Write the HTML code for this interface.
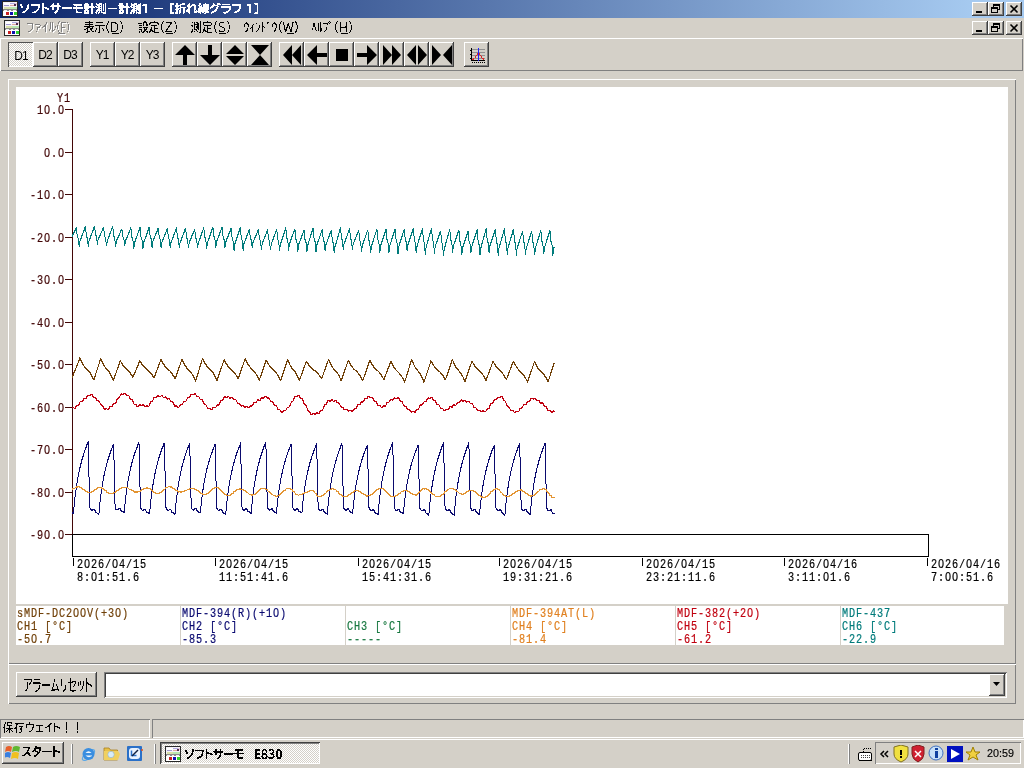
<!DOCTYPE html><html><head><meta charset="utf-8"><style>
*{margin:0;padding:0;box-sizing:border-box}
html,body{width:1024px;height:768px;overflow:hidden;background:#D4D0C8}
body{position:relative;font-family:"Liberation Sans",sans-serif}
div{position:absolute}
.m{font:12px/12px "Liberation Mono",monospace;letter-spacing:1.035px;white-space:pre;transform:scaleX(0.85) translateZ(0);transform-origin:0 0;-webkit-text-stroke:0.2px currentColor}
.u{font:12px/12px "Liberation Sans",sans-serif;white-space:pre;color:#000}
.fit span{-webkit-text-stroke:0.15px currentColor}
</style></head><body>
<div style="position:absolute;left:0px;top:0px;width:1024px;height:18px;background:linear-gradient(to right,#0A246A 0px,#A6CAF0 975px);"></div>
<div style="left:2px;top:1px;width:16px;height:16px"><svg width="16" height="16" viewBox="0 0 16 16" shape-rendering="crispEdges">
<rect x="0" y="0" width="16" height="16" fill="#282828"/>
<rect x="1" y="1" width="14" height="7" fill="#f4f2f8"/>
<rect x="2" y="2" width="6" height="2" fill="#ffffff"/><rect x="8" y="2" width="5" height="1" fill="#b0a8e0"/><rect x="13" y="2" width="2" height="2" fill="#e8c8d8"/>
<rect x="2" y="4" width="5" height="1" fill="#a098d0"/><rect x="8" y="4" width="5" height="1" fill="#e0a8a0"/><rect x="12" y="3" width="2" height="2" fill="#503050"/>
<rect x="2" y="6" width="6" height="2" fill="#d8e0a8"/><rect x="8" y="6" width="7" height="2" fill="#b8e8b0"/>
<rect x="1" y="8" width="14" height="2" fill="#8a8a8a"/><rect x="2" y="9" width="3" height="1" fill="#f0f0f0"/><rect x="7" y="9" width="2" height="1" fill="#f0f0f0"/><rect x="11" y="9" width="3" height="1" fill="#f0f0f0"/>
<rect x="1" y="10" width="14" height="5" fill="#ffffff"/>
<rect x="4" y="11" width="3" height="3" fill="#c82020"/><rect x="8" y="11" width="3" height="3" fill="#1010b0"/><rect x="12" y="11" width="3" height="3" fill="#30d030"/>
</svg></div>
<div style="position:absolute;left:972px;top:2px;width:16px;height:14px;background:#D4D0C8;box-shadow:inset -1px -1px #404040, inset 1px 1px #FFFFFF, inset -2px -2px #808080;"></div><div style="position:absolute;left:976px;top:11px;width:6px;height:2px;background:#000;"></div><div style="position:absolute;left:988px;top:2px;width:16px;height:14px;background:#D4D0C8;box-shadow:inset -1px -1px #404040, inset 1px 1px #FFFFFF, inset -2px -2px #808080;"></div><div style="left:988px;top:2px;width:16px;height:14px"><svg width="16" height="14" shape-rendering="crispEdges"><rect x="5.5" y="2.5" width="6" height="5" fill="none" stroke="#000"/><rect x="5" y="2" width="7" height="2" fill="#000"/><rect x="3.5" y="5.5" width="6" height="5" fill="#D4D0C8" stroke="#000"/><rect x="3" y="5" width="7" height="2" fill="#000"/></svg></div><div style="position:absolute;left:1006px;top:2px;width:16px;height:14px;background:#D4D0C8;box-shadow:inset -1px -1px #404040, inset 1px 1px #FFFFFF, inset -2px -2px #808080;"></div><div style="left:1006px;top:2px;width:16px;height:14px"><svg width="16" height="14"><path d="M4.5,3.5 L11.5,10.5 M11.5,3.5 L4.5,10.5" stroke="#000" stroke-width="1.6"/></svg></div>
<div style="left:4px;top:20px;width:16px;height:16px"><svg width="16" height="16" viewBox="0 0 16 16" shape-rendering="crispEdges">
<rect x="0" y="0" width="16" height="16" fill="#282828"/>
<rect x="1" y="1" width="14" height="7" fill="#f4f2f8"/>
<rect x="2" y="2" width="6" height="2" fill="#ffffff"/><rect x="8" y="2" width="5" height="1" fill="#b0a8e0"/><rect x="13" y="2" width="2" height="2" fill="#e8c8d8"/>
<rect x="2" y="4" width="5" height="1" fill="#a098d0"/><rect x="8" y="4" width="5" height="1" fill="#e0a8a0"/><rect x="12" y="3" width="2" height="2" fill="#503050"/>
<rect x="2" y="6" width="6" height="2" fill="#d8e0a8"/><rect x="8" y="6" width="7" height="2" fill="#b8e8b0"/>
<rect x="1" y="8" width="14" height="2" fill="#8a8a8a"/><rect x="2" y="9" width="3" height="1" fill="#f0f0f0"/><rect x="7" y="9" width="2" height="1" fill="#f0f0f0"/><rect x="11" y="9" width="3" height="1" fill="#f0f0f0"/>
<rect x="1" y="10" width="14" height="5" fill="#ffffff"/>
<rect x="4" y="11" width="3" height="3" fill="#c82020"/><rect x="8" y="11" width="3" height="3" fill="#1010b0"/><rect x="12" y="11" width="3" height="3" fill="#30d030"/>
</svg></div>
<div style="position:absolute;left:972px;top:21px;width:16px;height:14px;background:#D4D0C8;box-shadow:inset -1px -1px #404040, inset 1px 1px #FFFFFF, inset -2px -2px #808080;"></div><div style="position:absolute;left:976px;top:30px;width:6px;height:2px;background:#000;"></div><div style="position:absolute;left:988px;top:21px;width:16px;height:14px;background:#D4D0C8;box-shadow:inset -1px -1px #404040, inset 1px 1px #FFFFFF, inset -2px -2px #808080;"></div><div style="left:988px;top:21px;width:16px;height:14px"><svg width="16" height="14" shape-rendering="crispEdges"><rect x="5.5" y="2.5" width="6" height="5" fill="none" stroke="#000"/><rect x="5" y="2" width="7" height="2" fill="#000"/><rect x="3.5" y="5.5" width="6" height="5" fill="#D4D0C8" stroke="#000"/><rect x="3" y="5" width="7" height="2" fill="#000"/></svg></div><div style="position:absolute;left:1006px;top:21px;width:16px;height:14px;background:#D4D0C8;box-shadow:inset -1px -1px #404040, inset 1px 1px #FFFFFF, inset -2px -2px #808080;"></div><div style="left:1006px;top:21px;width:16px;height:14px"><svg width="16" height="14"><path d="M4.5,3.5 L11.5,10.5 M11.5,3.5 L4.5,10.5" stroke="#000" stroke-width="1.6"/></svg></div>
<div style="position:absolute;left:0px;top:38px;width:1023px;height:33px;background:#D4D0C8;box-shadow:inset 1px 1px #fff, inset -1px -1px #808080"></div>
<div style="left:8px;top:42px;width:25px;height:25px;background:repeating-conic-gradient(#fff 0 25%,#D4D0C8 0 50%) 0 0/2px 2px;box-shadow:inset 1px 1px #505050, inset -1px -1px #fff"></div>
<div style="position:absolute;left:9px;top:50px;font:12px/12px 'Liberation Sans', sans-serif;color:#000;white-space:pre;transform:translateZ(0);width:25px;text-align:center;letter-spacing:-1px;text-indent:-1px">D1</div>
<div style="left:33px;top:42px;width:25px;height:25px;background:#D4D0C8;box-shadow:inset -1px -1px #404040, inset 1px 1px #fff, inset -2px -2px #808080"></div>
<div style="position:absolute;left:33px;top:49px;font:12px/12px 'Liberation Sans', sans-serif;color:#000;white-space:pre;transform:translateZ(0);width:25px;text-align:center;letter-spacing:-1px;text-indent:-1px">D2</div>
<div style="left:58px;top:42px;width:25px;height:25px;background:#D4D0C8;box-shadow:inset -1px -1px #404040, inset 1px 1px #fff, inset -2px -2px #808080"></div>
<div style="position:absolute;left:58px;top:49px;font:12px/12px 'Liberation Sans', sans-serif;color:#000;white-space:pre;transform:translateZ(0);width:25px;text-align:center;letter-spacing:-1px;text-indent:-1px">D3</div>
<div style="left:90px;top:42px;width:25px;height:25px;background:#D4D0C8;box-shadow:inset -1px -1px #404040, inset 1px 1px #fff, inset -2px -2px #808080"></div>
<div style="position:absolute;left:90px;top:49px;font:12px/12px 'Liberation Sans', sans-serif;color:#000;white-space:pre;transform:translateZ(0);width:25px;text-align:center;letter-spacing:-1px;text-indent:-1px">Y1</div>
<div style="left:115px;top:42px;width:25px;height:25px;background:#D4D0C8;box-shadow:inset -1px -1px #404040, inset 1px 1px #fff, inset -2px -2px #808080"></div>
<div style="position:absolute;left:115px;top:49px;font:12px/12px 'Liberation Sans', sans-serif;color:#000;white-space:pre;transform:translateZ(0);width:25px;text-align:center;letter-spacing:-1px;text-indent:-1px">Y2</div>
<div style="left:140px;top:42px;width:25px;height:25px;background:#D4D0C8;box-shadow:inset -1px -1px #404040, inset 1px 1px #fff, inset -2px -2px #808080"></div>
<div style="position:absolute;left:140px;top:49px;font:12px/12px 'Liberation Sans', sans-serif;color:#000;white-space:pre;transform:translateZ(0);width:25px;text-align:center;letter-spacing:-1px;text-indent:-1px">Y3</div>
<div style="left:172px;top:42px;width:25px;height:25px;background:#D4D0C8;box-shadow:inset -1px -1px #404040, inset 1px 1px #fff, inset -2px -2px #808080"></div>
<div style="left:197px;top:42px;width:25px;height:25px;background:#D4D0C8;box-shadow:inset -1px -1px #404040, inset 1px 1px #fff, inset -2px -2px #808080"></div>
<div style="left:222px;top:42px;width:25px;height:25px;background:#D4D0C8;box-shadow:inset -1px -1px #404040, inset 1px 1px #fff, inset -2px -2px #808080"></div>
<div style="left:247px;top:42px;width:25px;height:25px;background:#D4D0C8;box-shadow:inset -1px -1px #404040, inset 1px 1px #fff, inset -2px -2px #808080"></div>
<div style="left:279px;top:42px;width:25px;height:25px;background:#D4D0C8;box-shadow:inset -1px -1px #404040, inset 1px 1px #fff, inset -2px -2px #808080"></div>
<div style="left:304px;top:42px;width:25px;height:25px;background:#D4D0C8;box-shadow:inset -1px -1px #404040, inset 1px 1px #fff, inset -2px -2px #808080"></div>
<div style="left:329px;top:42px;width:25px;height:25px;background:#D4D0C8;box-shadow:inset -1px -1px #404040, inset 1px 1px #fff, inset -2px -2px #808080"></div>
<div style="left:354px;top:42px;width:25px;height:25px;background:#D4D0C8;box-shadow:inset -1px -1px #404040, inset 1px 1px #fff, inset -2px -2px #808080"></div>
<div style="left:379px;top:42px;width:25px;height:25px;background:#D4D0C8;box-shadow:inset -1px -1px #404040, inset 1px 1px #fff, inset -2px -2px #808080"></div>
<div style="left:404px;top:42px;width:25px;height:25px;background:#D4D0C8;box-shadow:inset -1px -1px #404040, inset 1px 1px #fff, inset -2px -2px #808080"></div>
<div style="left:429px;top:42px;width:25px;height:25px;background:#D4D0C8;box-shadow:inset -1px -1px #404040, inset 1px 1px #fff, inset -2px -2px #808080"></div>
<div style="left:464px;top:42px;width:25px;height:25px;background:#D4D0C8;box-shadow:inset -1px -1px #404040, inset 1px 1px #fff, inset -2px -2px #808080"></div>
<svg style="position:absolute;left:0;top:0" width="1024" height="80"><g fill="#000"><path d="M175,55 L185,45 L195,55 Z M183,55 h4 v10 h-4 Z"/><path d="M200,55 L220,55 L210,65 Z M208,45 h4 v10 h-4 Z"/><path d="M226,54 L244,54 L235,45 Z M226,56 L244,56 L235,65 Z"/><path d="M251,45 L269,45 L260,55 Z M251,65 L269,65 L260,55 Z"/><path d="M283,55 L292,45 L292,65 Z M292,55 L301,45 L301,65 Z"/><path d="M307,55 L317,45 L317,65 Z M317,53 h10 v4 h-10 Z"/><path d="M336,49 h12 v12 h-12 Z"/><path d="M377,55 L367,45 L367,65 Z M357,53 h10 v4 h-10 Z"/><path d="M392,55 L383,45 L383,65 Z M401,55 L392,45 L392,65 Z"/><path d="M407,55 L416,45 L416,65 Z M427,55 L418,45 L418,65 Z"/><path d="M441,55 L432,45 L432,65 Z M443,55 L452,45 L452,65 Z"/></g><g shape-rendering="crispEdges"><rect x="472" y="49" width="13" height="1" fill="#909090"/><rect x="472" y="52" width="13" height="1" fill="#909090"/><rect x="472" y="55" width="13" height="1" fill="#909090"/><rect x="472" y="58" width="13" height="1" fill="#909090"/><rect x="471" y="48" width="1" height="13" fill="#000"/><rect x="471" y="60" width="14" height="1" fill="#000"/><rect x="470" y="50" width="1" height="1" fill="#000"/><rect x="470" y="54" width="1" height="1" fill="#000"/><rect x="470" y="58" width="1" height="1" fill="#000"/><path d="M472.5,59.5 L474.5,58.5 L476.5,55.5 L478.5,52.5 L480.5,55.5 L482.5,58.5 L484.5,59.5" stroke="#e02020" fill="none"/><rect x="478" y="48" width="1" height="13" fill="#2020ff"/><rect x="472" y="62" width="1" height="1" fill="#000"/><rect x="474" y="62" width="1" height="1" fill="#000"/><rect x="476" y="62" width="1" height="1" fill="#000"/><rect x="478" y="62" width="1" height="1" fill="#000"/><rect x="480" y="62" width="1" height="1" fill="#000"/><rect x="482" y="62" width="1" height="1" fill="#000"/><rect x="484" y="62" width="1" height="1" fill="#000"/></g></svg>
<div style="position:absolute;left:8px;top:79px;width:1008px;height:585px;background:#D4D0C8;box-shadow:inset 1px 1px #fff, inset -1px -1px #808080"></div>
<div style="position:absolute;left:16px;top:87px;width:992px;height:517px;background:#fff;"></div>
<div style="position:absolute;left:16px;top:606px;width:988px;height:39px;background:#fff;"></div>
<div style="position:absolute;left:180px;top:606px;width:1px;height:39px;background:#D4D0C8;"></div>
<div style="position:absolute;left:345px;top:606px;width:1px;height:39px;background:#D4D0C8;"></div>
<div style="position:absolute;left:510px;top:606px;width:1px;height:39px;background:#D4D0C8;"></div>
<div style="position:absolute;left:675px;top:606px;width:1px;height:39px;background:#D4D0C8;"></div>
<div style="position:absolute;left:840px;top:606px;width:1px;height:39px;background:#D4D0C8;"></div>
<svg style="position:absolute;left:0;top:0" width="1024" height="768"><g shape-rendering="crispEdges" fill="#420606"><rect x="72" y="109" width="1" height="426"/><rect x="65" y="109" width="7" height="1"/><rect x="65" y="152" width="7" height="1"/><rect x="65" y="194" width="7" height="1"/><rect x="65" y="237" width="7" height="1"/><rect x="65" y="279" width="7" height="1"/><rect x="65" y="322" width="7" height="1"/><rect x="65" y="364" width="7" height="1"/><rect x="65" y="407" width="7" height="1"/><rect x="65" y="449" width="7" height="1"/><rect x="65" y="492" width="7" height="1"/><rect x="65" y="534" width="7" height="1"/></g><g shape-rendering="crispEdges" fill="#000"><rect x="72" y="534" width="857" height="1"/><rect x="72" y="556" width="857" height="1"/><rect x="72" y="534" width="1" height="23"/><rect x="928" y="534" width="1" height="23"/><rect x="73" y="558" width="1" height="8"/><rect x="215" y="558" width="1" height="8"/><rect x="358" y="558" width="1" height="8"/><rect x="499" y="558" width="1" height="8"/><rect x="642" y="558" width="1" height="8"/><rect x="784" y="558" width="1" height="8"/><rect x="927" y="558" width="1" height="8"/></g><path d="M72,375h1v3h-1zM73,372h1v4h-1zM74,370h1v3h-1zM75,368h1v3h-1zM76,365h1v3h-1zM77,363h1v3h-1zM78,360h1v3h-1zM79,357h1v4h-1zM80,358h1v3h-1zM81,360h1v3h-1zM82,362h1v3h-1zM83,364h1v2h-1zM84,366h1v2h-1zM85,367h1v2h-1zM86,368h1v2h-1zM87,369h1v2h-1zM88,370h1v2h-1zM89,371h1v2h-1zM90,372h1v3h-1zM91,374h1v3h-1zM92,376h1v3h-1zM93,378h1v2h-1zM94,376h1v4h-1zM95,373h1v4h-1zM96,370h1v3h-1zM97,367h1v3h-1zM98,364h1v3h-1zM99,360h1v4h-1zM100,358h1v3h-1zM101,359h1v3h-1zM102,361h1v3h-1zM103,363h1v3h-1zM104,365h1v2h-1zM105,367h1v2h-1zM106,368h1v2h-1zM107,369h1v2h-1zM108,370h1v2h-1zM109,371h1v3h-1zM110,373h1v3h-1zM111,375h1v3h-1zM112,377h1v3h-1zM113,378h1v3h-1zM114,375h1v4h-1zM115,373h1v3h-1zM116,370h1v3h-1zM117,367h1v3h-1zM118,364h1v4h-1zM119,361h1v4h-1zM120,360h1v2h-1zM121,362h1v2h-1zM122,363h1v3h-1zM123,365h1v2h-1zM124,366h1v2h-1zM125,367h1v2h-1zM126,368h1v2h-1zM127,369h1v2h-1zM128,370h1v2h-1zM129,371h1v2h-1zM130,372h1v3h-1zM131,374h1v2h-1zM132,375h1v3h-1zM133,374h1v3h-1zM134,372h1v3h-1zM135,370h1v3h-1zM136,367h1v3h-1zM137,365h1v3h-1zM138,362h1v4h-1zM139,360h1v3h-1zM140,361h1v2h-1zM141,362h1v3h-1zM142,364h1v2h-1zM143,365h1v2h-1zM144,366h1v2h-1zM145,367h1v2h-1zM146,368h1v2h-1zM147,369h1v2h-1zM148,370h1v2h-1zM149,371h1v2h-1zM150,372h1v2h-1zM151,373h1v2h-1zM152,374h1v3h-1zM153,376h1v2h-1zM154,375h1v3h-1zM155,372h1v4h-1zM156,370h1v3h-1zM157,367h1v3h-1zM158,364h1v4h-1zM159,362h1v3h-1zM160,359h1v3h-1zM161,359h1v3h-1zM162,361h1v3h-1zM163,363h1v2h-1zM164,364h1v3h-1zM165,366h1v2h-1zM166,367h1v2h-1zM167,368h1v2h-1zM168,369h1v2h-1zM169,370h1v1h-1zM170,371h1v2h-1zM171,372h1v2h-1zM172,373h1v3h-1zM173,375h1v2h-1zM174,376h1v3h-1zM175,376h1v3h-1zM176,373h1v4h-1zM177,370h1v4h-1zM178,367h1v4h-1zM179,365h1v3h-1zM180,362h1v3h-1zM181,359h1v3h-1zM182,359h1v3h-1zM183,361h1v3h-1zM184,363h1v3h-1zM185,365h1v2h-1zM186,366h1v3h-1zM187,368h1v2h-1zM188,369h1v2h-1zM189,370h1v2h-1zM190,371h1v2h-1zM191,372h1v2h-1zM192,374h1v2h-1zM193,375h1v3h-1zM194,377h1v3h-1zM195,379h1v3h-1zM196,376h1v4h-1zM197,373h1v4h-1zM198,370h1v4h-1zM199,366h1v4h-1zM200,363h1v4h-1zM201,360h1v4h-1zM202,358h1v2h-1zM203,359h1v3h-1zM204,361h1v3h-1zM205,363h1v2h-1zM206,364h1v3h-1zM207,366h1v2h-1zM208,367h1v2h-1zM209,368h1v2h-1zM210,369h1v2h-1zM211,370h1v2h-1zM212,371h1v2h-1zM213,372h1v3h-1zM214,374h1v3h-1zM215,376h1v3h-1zM216,378h1v3h-1zM217,377h1v4h-1zM218,374h1v4h-1zM219,371h1v4h-1zM220,368h1v4h-1zM221,366h1v3h-1zM222,363h1v3h-1zM223,360h1v3h-1zM224,359h1v3h-1zM225,361h1v3h-1zM226,363h1v2h-1zM227,364h1v3h-1zM228,366h1v2h-1zM229,367h1v2h-1zM230,368h1v2h-1zM231,369h1v2h-1zM232,370h1v2h-1zM233,371h1v2h-1zM234,372h1v2h-1zM235,373h1v2h-1zM236,375h1v2h-1zM237,376h1v3h-1zM238,376h1v3h-1zM239,373h1v4h-1zM240,370h1v4h-1zM241,367h1v4h-1zM242,365h1v3h-1zM243,362h1v3h-1zM244,359h1v3h-1zM245,358h1v3h-1zM246,360h1v3h-1zM247,362h1v3h-1zM248,364h1v2h-1zM249,365h1v2h-1zM250,367h1v2h-1zM251,368h1v2h-1zM252,369h1v2h-1zM253,370h1v2h-1zM254,371h1v2h-1zM255,372h1v2h-1zM256,374h1v2h-1zM257,375h1v3h-1zM258,377h1v3h-1zM259,378h1v3h-1zM260,375h1v3h-1zM261,372h1v4h-1zM262,369h1v4h-1zM263,366h1v4h-1zM264,363h1v4h-1zM265,360h1v4h-1zM266,360h1v2h-1zM267,361h1v3h-1zM268,363h1v2h-1zM269,365h1v2h-1zM270,366h1v2h-1zM271,367h1v2h-1zM272,368h1v2h-1zM273,369h1v2h-1zM274,370h1v2h-1zM275,371h1v2h-1zM276,372h1v2h-1zM277,374h1v2h-1zM278,375h1v3h-1zM279,377h1v3h-1zM280,379h1v2h-1zM281,376h1v4h-1zM282,373h1v4h-1zM283,370h1v4h-1zM284,367h1v4h-1zM285,364h1v4h-1zM286,361h1v4h-1zM287,359h1v3h-1zM288,360h1v3h-1zM289,362h1v3h-1zM290,365h1v2h-1zM291,366h1v3h-1zM292,368h1v2h-1zM293,369h1v2h-1zM294,370h1v2h-1zM295,371h1v3h-1zM296,373h1v3h-1zM297,375h1v3h-1zM298,377h1v3h-1zM299,378h1v3h-1zM300,376h1v3h-1zM301,373h1v3h-1zM302,370h1v4h-1zM303,367h1v4h-1zM304,365h1v3h-1zM305,362h1v3h-1zM306,361h1v2h-1zM307,362h1v2h-1zM308,363h1v3h-1zM309,365h1v2h-1zM310,366h1v2h-1zM311,367h1v2h-1zM312,368h1v2h-1zM313,369h1v2h-1zM314,370h1v1h-1zM315,370h1v2h-1zM316,371h1v2h-1zM317,372h1v2h-1zM318,373h1v2h-1zM319,375h1v2h-1zM320,376h1v2h-1zM321,377h1v2h-1zM322,375h1v3h-1zM323,372h1v3h-1zM324,369h1v3h-1zM325,366h1v4h-1zM326,363h1v4h-1zM327,361h1v3h-1zM328,359h1v2h-1zM329,360h1v3h-1zM330,362h1v3h-1zM331,364h1v3h-1zM332,366h1v2h-1zM333,368h1v2h-1zM334,369h1v2h-1zM335,370h1v2h-1zM336,371h1v2h-1zM337,372h1v2h-1zM338,374h1v2h-1zM339,375h1v3h-1zM340,378h1v3h-1zM341,378h1v3h-1zM342,375h1v4h-1zM343,372h1v4h-1zM344,369h1v4h-1zM345,367h1v3h-1zM346,364h1v3h-1zM347,361h1v3h-1zM348,360h1v2h-1zM349,361h1v3h-1zM350,363h1v3h-1zM351,365h1v2h-1zM352,366h1v2h-1zM353,368h1v2h-1zM354,369h1v1h-1zM355,370h1v1h-1zM356,370h1v2h-1zM357,371h1v2h-1zM358,373h1v2h-1zM359,374h1v2h-1zM360,375h1v3h-1zM361,377h1v3h-1zM362,379h1v2h-1zM363,377h1v3h-1zM364,374h1v3h-1zM365,371h1v4h-1zM366,368h1v4h-1zM367,365h1v4h-1zM368,362h1v4h-1zM369,360h1v3h-1zM370,360h1v3h-1zM371,362h1v3h-1zM372,364h1v2h-1zM373,365h1v3h-1zM374,367h1v2h-1zM375,368h1v2h-1zM376,369h1v2h-1zM377,370h1v1h-1zM378,371h1v1h-1zM379,372h1v2h-1zM380,373h1v2h-1zM381,374h1v3h-1zM382,376h1v2h-1zM383,378h1v2h-1zM384,376h1v4h-1zM385,374h1v3h-1zM386,371h1v3h-1zM387,368h1v4h-1zM388,366h1v3h-1zM389,363h1v4h-1zM390,361h1v3h-1zM391,361h1v3h-1zM392,363h1v3h-1zM393,365h1v3h-1zM394,367h1v2h-1zM395,368h1v2h-1zM396,370h1v1h-1zM397,371h1v1h-1zM398,372h1v1h-1zM399,373h1v2h-1zM400,374h1v2h-1zM401,375h1v2h-1zM402,377h1v2h-1zM403,378h1v3h-1zM404,380h1v3h-1zM405,378h1v3h-1zM406,374h1v4h-1zM407,371h1v4h-1zM408,368h1v4h-1zM409,364h1v4h-1zM410,361h1v4h-1zM411,359h1v3h-1zM412,360h1v3h-1zM413,362h1v3h-1zM414,365h1v2h-1zM415,367h1v2h-1zM416,368h1v2h-1zM417,369h1v2h-1zM418,371h1v2h-1zM419,372h1v2h-1zM420,373h1v3h-1zM421,375h1v3h-1zM422,377h1v3h-1zM423,379h1v4h-1zM424,379h1v3h-1zM425,376h1v3h-1zM426,373h1v3h-1zM427,370h1v3h-1zM428,367h1v3h-1zM429,364h1v3h-1zM430,360h1v4h-1zM431,361h1v2h-1zM432,362h1v3h-1zM433,364h1v2h-1zM434,366h1v2h-1zM435,367h1v2h-1zM436,368h1v2h-1zM437,369h1v2h-1zM438,370h1v2h-1zM439,371h1v1h-1zM440,372h1v2h-1zM441,373h1v2h-1zM442,374h1v2h-1zM443,375h1v3h-1zM444,377h1v3h-1zM445,378h1v2h-1zM446,375h1v3h-1zM447,372h1v4h-1zM448,369h1v4h-1zM449,366h1v4h-1zM450,363h1v4h-1zM451,360h1v4h-1zM452,359h1v2h-1zM453,361h1v3h-1zM454,363h1v3h-1zM455,365h1v3h-1zM456,367h1v2h-1zM457,368h1v2h-1zM458,369h1v2h-1zM459,371h1v2h-1zM460,372h1v2h-1zM461,373h1v3h-1zM462,375h1v2h-1zM463,377h1v3h-1zM464,379h1v3h-1zM465,378h1v4h-1zM466,375h1v4h-1zM467,372h1v4h-1zM468,369h1v4h-1zM469,366h1v4h-1zM470,364h1v3h-1zM471,361h1v3h-1zM472,361h1v2h-1zM473,363h1v2h-1zM474,364h1v3h-1zM475,366h1v2h-1zM476,367h1v2h-1zM477,368h1v2h-1zM478,369h1v2h-1zM479,370h1v2h-1zM480,371h1v2h-1zM481,372h1v2h-1zM482,373h1v2h-1zM483,375h1v2h-1zM484,376h1v3h-1zM485,378h1v3h-1zM486,377h1v4h-1zM487,375h1v3h-1zM488,372h1v3h-1zM489,369h1v4h-1zM490,367h1v3h-1zM491,364h1v3h-1zM492,361h1v3h-1zM493,361h1v2h-1zM494,363h1v2h-1zM495,364h1v3h-1zM496,366h1v2h-1zM497,367h1v2h-1zM498,368h1v2h-1zM499,369h1v2h-1zM500,370h1v2h-1zM501,371h1v2h-1zM502,372h1v2h-1zM503,374h1v2h-1zM504,375h1v3h-1zM505,377h1v2h-1zM506,378h1v2h-1zM507,375h1v3h-1zM508,372h1v4h-1zM509,370h1v3h-1zM510,367h1v3h-1zM511,364h1v4h-1zM512,362h1v3h-1zM513,361h1v2h-1zM514,362h1v3h-1zM515,364h1v2h-1zM516,366h1v2h-1zM517,367h1v2h-1zM518,369h1v2h-1zM519,370h1v2h-1zM520,371h1v2h-1zM521,372h1v2h-1zM522,373h1v2h-1zM523,374h1v2h-1zM524,375h1v3h-1zM525,377h1v2h-1zM526,379h1v2h-1zM527,380h1v3h-1zM528,377h1v4h-1zM529,374h1v4h-1zM530,371h1v4h-1zM531,369h1v3h-1zM532,366h1v3h-1zM533,363h1v3h-1zM534,361h1v2h-1zM535,362h1v3h-1zM536,364h1v3h-1zM537,366h1v3h-1zM538,368h1v2h-1zM539,369h1v2h-1zM540,370h1v2h-1zM541,371h1v2h-1zM542,372h1v2h-1zM543,373h1v2h-1zM544,374h1v3h-1zM545,376h1v2h-1zM546,377h1v3h-1zM547,379h1v3h-1zM548,379h1v3h-1zM549,376h1v3h-1zM550,372h1v4h-1zM551,369h1v4h-1zM552,366h1v4h-1zM553,363h1v4h-1zM554,363h1v1h-1z" fill="#704008" shape-rendering="crispEdges"/><path d="M72,512h1v2h-1zM73,507h1v7h-1zM74,497h1v10h-1zM75,490h1v7h-1zM76,483h1v7h-1zM77,477h1v6h-1zM78,472h1v5h-1zM79,467h1v5h-1zM80,463h1v5h-1zM81,459h1v5h-1zM82,456h1v4h-1zM83,453h1v4h-1zM84,450h1v3h-1zM85,447h1v3h-1zM86,444h1v4h-1zM87,442h1v3h-1zM88,441h1v36h-1zM89,477h1v31h-1zM90,508h1v2h-1zM91,509h1v2h-1zM92,509h1v2h-1zM93,509h1v1h-1zM94,509h1v2h-1zM95,510h1v3h-1zM96,512h1v1h-1zM97,513h1v1h-1zM98,513h1v2h-1zM99,502h1v11h-1zM100,494h1v8h-1zM101,487h1v7h-1zM102,481h1v6h-1zM103,475h1v6h-1zM104,471h1v5h-1zM105,467h1v4h-1zM106,463h1v4h-1zM107,459h1v4h-1zM108,456h1v4h-1zM109,453h1v4h-1zM110,450h1v4h-1zM111,448h1v3h-1zM112,445h1v3h-1zM113,444h1v16h-1zM114,460h1v44h-1zM115,504h1v6h-1zM116,509h1v1h-1zM117,509h1v1h-1zM118,508h1v2h-1zM119,508h1v1h-1zM120,508h1v3h-1zM121,510h1v2h-1zM122,511h1v1h-1zM123,511h1v2h-1zM124,504h1v9h-1zM125,495h1v9h-1zM126,487h1v8h-1zM127,481h1v7h-1zM128,476h1v5h-1zM129,471h1v5h-1zM130,466h1v5h-1zM131,462h1v5h-1zM132,459h1v4h-1zM133,455h1v4h-1zM134,452h1v4h-1zM135,450h1v3h-1zM136,447h1v3h-1zM137,444h1v4h-1zM138,442h1v3h-1zM139,444h1v43h-1zM140,487h1v22h-1zM141,508h1v2h-1zM142,510h1v1h-1zM143,509h1v2h-1zM144,509h1v1h-1zM145,509h1v2h-1zM146,511h1v2h-1zM147,512h1v1h-1zM148,512h1v2h-1zM149,509h1v5h-1zM150,499h1v10h-1zM151,491h1v8h-1zM152,484h1v7h-1zM153,479h1v6h-1zM154,473h1v6h-1zM155,469h1v5h-1zM156,465h1v4h-1zM157,461h1v4h-1zM158,457h1v4h-1zM159,454h1v4h-1zM160,451h1v4h-1zM161,448h1v4h-1zM162,446h1v3h-1zM163,443h1v4h-1zM164,443h1v28h-1zM165,471h1v37h-1zM166,507h1v3h-1zM167,509h1v2h-1zM168,510h1v1h-1zM169,509h1v1h-1zM170,509h1v1h-1zM171,510h1v3h-1zM172,512h1v1h-1zM173,512h1v2h-1zM174,513h1v2h-1zM175,503h1v11h-1zM176,495h1v8h-1zM177,487h1v8h-1zM178,481h1v6h-1zM179,476h1v5h-1zM180,471h1v5h-1zM181,466h1v5h-1zM182,463h1v4h-1zM183,459h1v4h-1zM184,456h1v4h-1zM185,453h1v3h-1zM186,450h1v3h-1zM187,447h1v3h-1zM188,445h1v3h-1zM189,443h1v13h-1zM190,456h1v42h-1zM191,498h1v11h-1zM192,509h1v1h-1zM193,509h1v2h-1zM194,508h1v2h-1zM195,508h1v1h-1zM196,508h1v3h-1zM197,510h1v2h-1zM198,511h1v2h-1zM199,512h1v1h-1zM200,506h1v7h-1zM201,497h1v9h-1zM202,489h1v8h-1zM203,483h1v7h-1zM204,478h1v5h-1zM205,473h1v5h-1zM206,468h1v5h-1zM207,465h1v4h-1zM208,461h1v4h-1zM209,458h1v4h-1zM210,455h1v3h-1zM211,452h1v3h-1zM212,449h1v4h-1zM213,447h1v3h-1zM214,444h1v3h-1zM215,444h1v37h-1zM216,481h1v28h-1zM217,508h1v2h-1zM218,510h1v1h-1zM219,509h1v2h-1zM220,509h1v1h-1zM221,509h1v2h-1zM222,510h1v3h-1zM223,512h1v2h-1zM224,513h1v1h-1zM225,511h1v4h-1zM226,501h1v10h-1zM227,493h1v8h-1zM228,486h1v7h-1zM229,480h1v6h-1zM230,475h1v5h-1zM231,470h1v5h-1zM232,466h1v5h-1zM233,462h1v4h-1zM234,459h1v4h-1zM235,455h1v4h-1zM236,452h1v4h-1zM237,450h1v3h-1zM238,447h1v3h-1zM239,445h1v3h-1zM240,442h1v22h-1zM241,464h1v43h-1zM242,507h1v3h-1zM243,509h1v2h-1zM244,509h1v2h-1zM245,508h1v2h-1zM246,508h1v2h-1zM247,509h1v3h-1zM248,511h1v1h-1zM249,511h1v2h-1zM250,512h1v2h-1zM251,504h1v10h-1zM252,495h1v9h-1zM253,487h1v8h-1zM254,481h1v6h-1zM255,475h1v6h-1zM256,470h1v6h-1zM257,466h1v5h-1zM258,462h1v4h-1zM259,458h1v5h-1zM260,455h1v4h-1zM261,452h1v4h-1zM262,449h1v4h-1zM263,446h1v4h-1zM264,444h1v3h-1zM265,442h1v7h-1zM266,449h1v43h-1zM267,492h1v17h-1zM268,508h1v2h-1zM269,509h1v2h-1zM270,509h1v1h-1zM271,508h1v2h-1zM272,508h1v3h-1zM273,510h1v2h-1zM274,511h1v2h-1zM275,512h1v1h-1zM276,507h1v7h-1zM277,498h1v9h-1zM278,490h1v8h-1zM279,484h1v6h-1zM280,478h1v6h-1zM281,473h1v5h-1zM282,469h1v5h-1zM283,465h1v4h-1zM284,461h1v4h-1zM285,458h1v4h-1zM286,455h1v3h-1zM287,452h1v3h-1zM288,449h1v3h-1zM289,447h1v3h-1zM290,444h1v3h-1zM291,444h1v32h-1zM292,476h1v32h-1zM293,508h1v2h-1zM294,509h1v2h-1zM295,509h1v2h-1zM296,508h1v2h-1zM297,508h1v2h-1zM298,509h1v3h-1zM299,511h1v1h-1zM300,511h1v2h-1zM301,512h1v1h-1zM302,501h1v11h-1zM303,493h1v8h-1zM304,486h1v7h-1zM305,480h1v6h-1zM306,475h1v5h-1zM307,470h1v5h-1zM308,466h1v5h-1zM309,462h1v5h-1zM310,459h1v4h-1zM311,456h1v4h-1zM312,453h1v3h-1zM313,450h1v4h-1zM314,448h1v3h-1zM315,445h1v3h-1zM316,443h1v16h-1zM317,459h1v43h-1zM318,502h1v8h-1zM319,509h1v2h-1zM320,510h1v1h-1zM321,509h1v2h-1zM322,509h1v1h-1zM323,509h1v3h-1zM324,511h1v2h-1zM325,512h1v2h-1zM326,513h1v1h-1zM327,506h1v9h-1zM328,497h1v9h-1zM329,489h1v8h-1zM330,483h1v6h-1zM331,477h1v6h-1zM332,472h1v5h-1zM333,468h1v4h-1zM334,464h1v4h-1zM335,460h1v4h-1zM336,457h1v4h-1zM337,454h1v3h-1zM338,451h1v3h-1zM339,448h1v3h-1zM340,445h1v4h-1zM341,443h1v3h-1zM342,445h1v41h-1zM343,486h1v23h-1zM344,508h1v2h-1zM345,509h1v2h-1zM346,509h1v2h-1zM347,508h1v2h-1zM348,508h1v2h-1zM349,510h1v2h-1zM350,511h1v2h-1zM351,512h1v1h-1zM352,509h1v5h-1zM353,500h1v9h-1zM354,492h1v8h-1zM355,485h1v7h-1zM356,480h1v5h-1zM357,475h1v5h-1zM358,470h1v5h-1zM359,466h1v5h-1zM360,463h1v4h-1zM361,459h1v4h-1zM362,456h1v4h-1zM363,453h1v4h-1zM364,451h1v3h-1zM365,448h1v3h-1zM366,446h1v3h-1zM367,445h1v24h-1zM368,469h1v39h-1zM369,507h1v3h-1zM370,509h1v2h-1zM371,510h1v1h-1zM372,509h1v2h-1zM373,509h1v2h-1zM374,510h1v3h-1zM375,512h1v2h-1zM376,513h1v1h-1zM377,513h1v2h-1zM378,504h1v11h-1zM379,495h1v9h-1zM380,488h1v7h-1zM381,481h1v7h-1zM382,476h1v5h-1zM383,471h1v5h-1zM384,466h1v5h-1zM385,462h1v5h-1zM386,459h1v4h-1zM387,455h1v4h-1zM388,452h1v4h-1zM389,449h1v4h-1zM390,447h1v3h-1zM391,444h1v3h-1zM392,442h1v13h-1zM393,455h1v41h-1zM394,496h1v13h-1zM395,509h1v2h-1zM396,510h1v1h-1zM397,509h1v2h-1zM398,509h1v1h-1zM399,509h1v3h-1zM400,511h1v2h-1zM401,512h1v1h-1zM402,512h1v2h-1zM403,507h1v7h-1zM404,498h1v9h-1zM405,491h1v7h-1zM406,484h1v7h-1zM407,479h1v5h-1zM408,474h1v5h-1zM409,469h1v5h-1zM410,465h1v5h-1zM411,462h1v4h-1zM412,459h1v3h-1zM413,456h1v3h-1zM414,453h1v3h-1zM415,450h1v3h-1zM416,448h1v3h-1zM417,445h1v3h-1zM418,445h1v34h-1zM419,479h1v30h-1zM420,508h1v2h-1zM421,510h1v1h-1zM422,510h1v1h-1zM423,509h1v2h-1zM424,509h1v2h-1zM425,510h1v3h-1zM426,513h1v1h-1zM427,513h1v2h-1zM428,513h1v3h-1zM429,502h1v11h-1zM430,494h1v8h-1zM431,486h1v8h-1zM432,480h1v7h-1zM433,475h1v6h-1zM434,470h1v5h-1zM435,466h1v5h-1zM436,462h1v4h-1zM437,458h1v4h-1zM438,455h1v4h-1zM439,452h1v4h-1zM440,449h1v4h-1zM441,446h1v4h-1zM442,444h1v3h-1zM443,442h1v21h-1zM444,463h1v43h-1zM445,506h1v4h-1zM446,509h1v2h-1zM447,510h1v1h-1zM448,509h1v2h-1zM449,509h1v2h-1zM450,510h1v3h-1zM451,512h1v2h-1zM452,513h1v2h-1zM453,514h1v1h-1zM454,506h1v10h-1zM455,496h1v10h-1zM456,489h1v7h-1zM457,482h1v7h-1zM458,477h1v6h-1zM459,472h1v5h-1zM460,467h1v5h-1zM461,463h1v5h-1zM462,460h1v4h-1zM463,456h1v4h-1zM464,453h1v4h-1zM465,450h1v4h-1zM466,447h1v4h-1zM467,445h1v3h-1zM468,442h1v7h-1zM469,449h1v41h-1zM470,490h1v19h-1zM471,508h1v3h-1zM472,510h1v1h-1zM473,509h1v2h-1zM474,509h1v1h-1zM475,509h1v3h-1zM476,511h1v2h-1zM477,512h1v2h-1zM478,513h1v2h-1zM479,509h1v6h-1zM480,500h1v9h-1zM481,492h1v8h-1zM482,485h1v7h-1zM483,480h1v6h-1zM484,475h1v5h-1zM485,470h1v5h-1zM486,466h1v5h-1zM487,463h1v4h-1zM488,459h1v4h-1zM489,456h1v4h-1zM490,453h1v4h-1zM491,450h1v4h-1zM492,448h1v3h-1zM493,446h1v3h-1zM494,445h1v29h-1zM495,474h1v34h-1zM496,508h1v2h-1zM497,509h1v2h-1zM498,510h1v1h-1zM499,509h1v2h-1zM500,509h1v2h-1zM501,510h1v3h-1zM502,512h1v2h-1zM503,513h1v2h-1zM504,514h1v2h-1zM505,503h1v11h-1zM506,495h1v8h-1zM507,487h1v8h-1zM508,481h1v7h-1zM509,476h1v5h-1zM510,471h1v5h-1zM511,467h1v4h-1zM512,463h1v4h-1zM513,459h1v4h-1zM514,456h1v4h-1zM515,453h1v3h-1zM516,450h1v3h-1zM517,447h1v4h-1zM518,445h1v3h-1zM519,443h1v14h-1zM520,457h1v43h-1zM521,500h1v10h-1zM522,509h1v2h-1zM523,510h1v1h-1zM524,509h1v2h-1zM525,509h1v1h-1zM526,509h1v3h-1zM527,511h1v2h-1zM528,512h1v2h-1zM529,513h1v2h-1zM530,506h1v9h-1zM531,497h1v9h-1zM532,490h1v7h-1zM533,483h1v7h-1zM534,477h1v6h-1zM535,472h1v6h-1zM536,468h1v5h-1zM537,464h1v4h-1zM538,460h1v5h-1zM539,457h1v4h-1zM540,454h1v4h-1zM541,451h1v3h-1zM542,448h1v4h-1zM543,446h1v3h-1zM544,443h1v3h-1zM545,443h1v41h-1zM546,484h1v25h-1zM547,508h1v3h-1zM548,510h1v1h-1zM549,510h1v1h-1zM550,509h1v2h-1zM551,509h1v3h-1zM552,512h1v2h-1zM553,513h1v1h-1zM554,513h1v1h-1z" fill="#0A0A6E" shape-rendering="crispEdges"/><path d="M72,488h1v2h-1zM73,488h1v1h-1zM74,488h1v1h-1zM75,487h1v1h-1zM76,486h1v2h-1zM77,486h1v2h-1zM78,486h1v1h-1zM79,486h1v2h-1zM80,487h1v1h-1zM81,487h1v2h-1zM82,488h1v2h-1zM83,489h1v1h-1zM84,489h1v2h-1zM85,490h1v2h-1zM86,491h1v1h-1zM87,491h1v2h-1zM88,492h1v1h-1zM89,492h1v1h-1zM90,492h1v1h-1zM91,491h1v2h-1zM92,491h1v1h-1zM93,490h1v2h-1zM94,489h1v2h-1zM95,489h1v1h-1zM96,488h1v2h-1zM97,487h1v2h-1zM98,487h1v1h-1zM99,487h1v1h-1zM100,487h1v1h-1zM101,487h1v2h-1zM102,488h1v1h-1zM103,488h1v2h-1zM104,489h1v2h-1zM105,490h1v1h-1zM106,490h1v3h-1zM107,492h1v1h-1zM108,492h1v2h-1zM109,493h1v1h-1zM110,493h1v1h-1zM111,493h1v1h-1zM112,493h1v1h-1zM113,492h1v2h-1zM114,492h1v1h-1zM115,491h1v2h-1zM116,490h1v2h-1zM117,490h1v1h-1zM118,489h1v2h-1zM119,488h1v2h-1zM120,488h1v1h-1zM121,487h1v2h-1zM122,487h1v1h-1zM123,487h1v1h-1zM124,487h1v1h-1zM125,487h1v1h-1zM126,487h1v1h-1zM127,487h1v1h-1zM128,488h1v1h-1zM129,489h1v1h-1zM130,489h1v1h-1zM131,489h1v2h-1zM132,490h1v1h-1zM133,490h1v2h-1zM134,491h1v2h-1zM135,491h1v2h-1zM136,491h1v2h-1zM137,491h1v2h-1zM138,491h1v1h-1zM139,491h1v1h-1zM140,490h1v2h-1zM141,489h1v2h-1zM142,489h1v1h-1zM143,488h1v2h-1zM144,488h1v1h-1zM145,488h1v1h-1zM146,487h1v2h-1zM147,487h1v2h-1zM148,488h1v1h-1zM149,488h1v1h-1zM150,488h1v2h-1zM151,489h1v2h-1zM152,490h1v2h-1zM153,491h1v2h-1zM154,492h1v1h-1zM155,492h1v2h-1zM156,493h1v1h-1zM157,493h1v1h-1zM158,493h1v1h-1zM159,492h1v2h-1zM160,492h1v1h-1zM161,491h1v2h-1zM162,490h1v2h-1zM163,489h1v2h-1zM164,489h1v1h-1zM165,487h1v2h-1zM166,487h1v1h-1zM167,487h1v1h-1zM168,486h1v1h-1zM169,486h1v1h-1zM170,486h1v2h-1zM171,486h1v2h-1zM172,487h1v2h-1zM173,488h1v1h-1zM174,488h1v2h-1zM175,489h1v2h-1zM176,490h1v1h-1zM177,490h1v2h-1zM178,491h1v2h-1zM179,491h1v1h-1zM180,491h1v2h-1zM181,491h1v2h-1zM182,491h1v1h-1zM183,491h1v1h-1zM184,490h1v2h-1zM185,490h1v1h-1zM186,490h1v1h-1zM187,489h1v1h-1zM188,489h1v1h-1zM189,488h1v2h-1zM190,488h1v1h-1zM191,488h1v1h-1zM192,488h1v1h-1zM193,488h1v1h-1zM194,488h1v2h-1zM195,489h1v1h-1zM196,489h1v2h-1zM197,490h1v1h-1zM198,490h1v2h-1zM199,491h1v2h-1zM200,492h1v2h-1zM201,493h1v1h-1zM202,493h1v2h-1zM203,494h1v1h-1zM204,494h1v1h-1zM205,494h1v1h-1zM206,493h1v2h-1zM207,493h1v1h-1zM208,492h1v2h-1zM209,491h1v2h-1zM210,490h1v2h-1zM211,489h1v2h-1zM212,488h1v2h-1zM213,488h1v1h-1zM214,487h1v2h-1zM215,487h1v1h-1zM216,487h1v1h-1zM217,487h1v1h-1zM218,487h1v2h-1zM219,488h1v2h-1zM220,489h1v2h-1zM221,490h1v2h-1zM222,491h1v2h-1zM223,492h1v2h-1zM224,493h1v2h-1zM225,494h1v1h-1zM226,494h1v2h-1zM227,495h1v1h-1zM228,495h1v1h-1zM229,495h1v1h-1zM230,494h1v2h-1zM231,493h1v2h-1zM232,493h1v1h-1zM233,491h1v3h-1zM234,491h1v1h-1zM235,490h1v2h-1zM236,489h1v2h-1zM237,489h1v1h-1zM238,489h1v1h-1zM239,488h1v2h-1zM240,488h1v2h-1zM241,489h1v1h-1zM242,489h1v1h-1zM243,489h1v2h-1zM244,490h1v1h-1zM245,490h1v2h-1zM246,491h1v2h-1zM247,492h1v1h-1zM248,493h1v1h-1zM249,494h1v1h-1zM250,494h1v1h-1zM251,494h1v2h-1zM252,494h1v2h-1zM253,494h1v1h-1zM254,494h1v1h-1zM255,493h1v2h-1zM256,492h1v2h-1zM257,491h1v2h-1zM258,490h1v2h-1zM259,489h1v2h-1zM260,488h1v2h-1zM261,488h1v1h-1zM262,488h1v1h-1zM263,488h1v1h-1zM264,488h1v1h-1zM265,488h1v2h-1zM266,489h1v1h-1zM267,489h1v2h-1zM268,491h1v1h-1zM269,491h1v2h-1zM270,492h1v2h-1zM271,493h1v2h-1zM272,494h1v1h-1zM273,495h1v1h-1zM274,495h1v1h-1zM275,495h1v2h-1zM276,496h1v1h-1zM277,495h1v2h-1zM278,495h1v1h-1zM279,494h1v2h-1zM280,493h1v2h-1zM281,492h1v2h-1zM282,491h1v2h-1zM283,490h1v2h-1zM284,490h1v1h-1zM285,489h1v2h-1zM286,488h1v1h-1zM287,488h1v1h-1zM288,488h1v1h-1zM289,488h1v1h-1zM290,488h1v2h-1zM291,489h1v1h-1zM292,489h1v3h-1zM293,491h1v1h-1zM294,491h1v2h-1zM295,493h1v2h-1zM296,494h1v1h-1zM297,494h1v1h-1zM298,495h1v1h-1zM299,494h1v1h-1zM300,494h1v1h-1zM301,494h1v1h-1zM302,493h1v2h-1zM303,493h1v1h-1zM304,492h1v2h-1zM305,492h1v1h-1zM306,492h1v1h-1zM307,491h1v2h-1zM308,491h1v1h-1zM309,490h1v2h-1zM310,490h1v1h-1zM311,490h1v1h-1zM312,490h1v1h-1zM313,490h1v2h-1zM314,491h1v2h-1zM315,493h1v1h-1zM316,493h1v3h-1zM317,495h1v2h-1zM318,496h1v1h-1zM319,496h1v1h-1zM320,496h1v1h-1zM321,495h1v2h-1zM322,495h1v1h-1zM323,494h1v2h-1zM324,493h1v2h-1zM325,493h1v1h-1zM326,491h1v2h-1zM327,490h1v2h-1zM328,490h1v1h-1zM329,489h1v2h-1zM330,489h1v1h-1zM331,488h1v2h-1zM332,488h1v1h-1zM333,488h1v2h-1zM334,489h1v1h-1zM335,489h1v1h-1zM336,490h1v2h-1zM337,491h1v1h-1zM338,491h1v3h-1zM339,493h1v2h-1zM340,494h1v1h-1zM341,494h1v2h-1zM342,495h1v2h-1zM343,496h1v1h-1zM344,496h1v1h-1zM345,496h1v1h-1zM346,496h1v1h-1zM347,495h1v2h-1zM348,494h1v2h-1zM349,494h1v1h-1zM350,493h1v2h-1zM351,492h1v2h-1zM352,492h1v1h-1zM353,491h1v2h-1zM354,490h1v2h-1zM355,490h1v1h-1zM356,490h1v1h-1zM357,490h1v1h-1zM358,490h1v2h-1zM359,491h1v1h-1zM360,491h1v2h-1zM361,492h1v2h-1zM362,493h1v1h-1zM363,493h1v2h-1zM364,494h1v1h-1zM365,494h1v2h-1zM366,495h1v2h-1zM367,495h1v2h-1zM368,495h1v1h-1zM369,495h1v1h-1zM370,494h1v2h-1zM371,494h1v1h-1zM372,493h1v2h-1zM373,492h1v2h-1zM374,491h1v2h-1zM375,490h1v2h-1zM376,489h1v2h-1zM377,489h1v1h-1zM378,488h1v2h-1zM379,488h1v1h-1zM380,488h1v1h-1zM381,488h1v1h-1zM382,488h1v1h-1zM383,488h1v2h-1zM384,489h1v2h-1zM385,490h1v2h-1zM386,491h1v2h-1zM387,492h1v2h-1zM388,493h1v2h-1zM389,494h1v2h-1zM390,495h1v2h-1zM391,496h1v1h-1zM392,496h1v1h-1zM393,496h1v1h-1zM394,496h1v1h-1zM395,495h1v2h-1zM396,495h1v1h-1zM397,494h1v2h-1zM398,493h1v2h-1zM399,493h1v1h-1zM400,492h1v2h-1zM401,491h1v1h-1zM402,491h1v1h-1zM403,490h1v2h-1zM404,490h1v1h-1zM405,490h1v1h-1zM406,490h1v1h-1zM407,490h1v2h-1zM408,491h1v1h-1zM409,491h1v2h-1zM410,492h1v2h-1zM411,493h1v1h-1zM412,493h1v2h-1zM413,494h1v1h-1zM414,494h1v1h-1zM415,494h1v2h-1zM416,494h1v2h-1zM417,493h1v2h-1zM418,492h1v2h-1zM419,491h1v2h-1zM420,490h1v2h-1zM421,489h1v2h-1zM422,488h1v2h-1zM423,488h1v1h-1zM424,488h1v2h-1zM425,488h1v1h-1zM426,488h1v2h-1zM427,489h1v1h-1zM428,489h1v2h-1zM429,490h1v2h-1zM430,491h1v2h-1zM431,492h1v2h-1zM432,493h1v2h-1zM433,494h1v1h-1zM434,494h1v2h-1zM435,496h1v1h-1zM436,496h1v1h-1zM437,496h1v1h-1zM438,496h1v1h-1zM439,496h1v1h-1zM440,495h1v2h-1zM441,494h1v2h-1zM442,494h1v1h-1zM443,493h1v2h-1zM444,491h1v3h-1zM445,491h1v1h-1zM446,490h1v2h-1zM447,489h1v2h-1zM448,489h1v1h-1zM449,488h1v1h-1zM450,488h1v1h-1zM451,488h1v1h-1zM452,488h1v1h-1zM453,488h1v2h-1zM454,489h1v1h-1zM455,489h1v2h-1zM456,490h1v2h-1zM457,491h1v1h-1zM458,492h1v1h-1zM459,493h1v1h-1zM460,493h1v1h-1zM461,493h1v2h-1zM462,494h1v1h-1zM463,493h1v2h-1zM464,493h1v1h-1zM465,492h1v2h-1zM466,491h1v2h-1zM467,491h1v1h-1zM468,490h1v2h-1zM469,490h1v1h-1zM470,490h1v1h-1zM471,490h1v1h-1zM472,490h1v1h-1zM473,490h1v2h-1zM474,491h1v1h-1zM475,491h1v2h-1zM476,492h1v2h-1zM477,493h1v2h-1zM478,494h1v2h-1zM479,495h1v1h-1zM480,495h1v2h-1zM481,496h1v2h-1zM482,496h1v2h-1zM483,497h1v1h-1zM484,497h1v1h-1zM485,496h1v2h-1zM486,496h1v1h-1zM487,495h1v2h-1zM488,494h1v2h-1zM489,493h1v2h-1zM490,491h1v3h-1zM491,491h1v1h-1zM492,490h1v2h-1zM493,489h1v2h-1zM494,489h1v1h-1zM495,488h1v2h-1zM496,488h1v1h-1zM497,488h1v2h-1zM498,489h1v1h-1zM499,489h1v2h-1zM500,491h1v2h-1zM501,492h1v1h-1zM502,493h1v2h-1zM503,494h1v2h-1zM504,495h1v1h-1zM505,495h1v2h-1zM506,496h1v1h-1zM507,496h1v1h-1zM508,496h1v1h-1zM509,495h1v2h-1zM510,495h1v1h-1zM511,494h1v2h-1zM512,493h1v2h-1zM513,493h1v1h-1zM514,492h1v2h-1zM515,491h1v2h-1zM516,491h1v1h-1zM517,490h1v2h-1zM518,490h1v1h-1zM519,490h1v1h-1zM520,489h1v2h-1zM521,489h1v2h-1zM522,490h1v2h-1zM523,491h1v1h-1zM524,491h1v2h-1zM525,492h1v2h-1zM526,493h1v1h-1zM527,493h1v2h-1zM528,494h1v2h-1zM529,495h1v1h-1zM530,495h1v2h-1zM531,495h1v2h-1zM532,495h1v1h-1zM533,495h1v1h-1zM534,494h1v2h-1zM535,493h1v2h-1zM536,492h1v2h-1zM537,491h1v2h-1zM538,491h1v1h-1zM539,489h1v2h-1zM540,489h1v1h-1zM541,489h1v1h-1zM542,488h1v2h-1zM543,488h1v1h-1zM544,488h1v2h-1zM545,489h1v1h-1zM546,489h1v3h-1zM547,491h1v2h-1zM548,492h1v2h-1zM549,493h1v3h-1zM550,495h1v1h-1zM551,495h1v3h-1zM552,497h1v1h-1zM553,497h1v1h-1zM554,497h1v1h-1z" fill="#E39432" shape-rendering="crispEdges"/><path d="M72,407h1v1h-1zM73,407h1v1h-1zM74,408h1v1h-1zM75,406h1v3h-1zM76,405h1v2h-1zM77,405h1v1h-1zM78,404h1v2h-1zM79,402h1v3h-1zM80,401h1v1h-1zM81,401h1v1h-1zM82,400h1v2h-1zM83,398h1v3h-1zM84,398h1v1h-1zM85,398h1v1h-1zM86,396h1v3h-1zM87,395h1v2h-1zM88,395h1v1h-1zM89,395h1v1h-1zM90,394h1v2h-1zM91,394h1v1h-1zM92,394h1v3h-1zM93,396h1v2h-1zM94,397h1v1h-1zM95,397h1v2h-1zM96,398h1v3h-1zM97,400h1v1h-1zM98,400h1v2h-1zM99,401h1v2h-1zM100,403h1v2h-1zM101,404h1v2h-1zM102,405h1v2h-1zM103,406h1v3h-1zM104,408h1v2h-1zM105,408h1v2h-1zM106,408h1v1h-1zM107,409h1v1h-1zM108,408h1v2h-1zM109,406h1v3h-1zM110,406h1v1h-1zM111,406h1v1h-1zM112,404h1v3h-1zM113,403h1v2h-1zM114,403h1v1h-1zM115,402h1v2h-1zM116,399h1v4h-1zM117,398h1v2h-1zM118,397h1v2h-1zM119,396h1v2h-1zM120,394h1v2h-1zM121,393h1v2h-1zM122,394h1v1h-1zM123,393h1v2h-1zM124,393h1v1h-1zM125,393h1v2h-1zM126,394h1v2h-1zM127,395h1v1h-1zM128,395h1v1h-1zM129,396h1v3h-1zM130,398h1v2h-1zM131,399h1v1h-1zM132,399h1v3h-1zM133,401h1v3h-1zM134,404h1v1h-1zM135,404h1v1h-1zM136,404h1v3h-1zM137,406h1v1h-1zM138,405h1v2h-1zM139,404h1v2h-1zM140,404h1v2h-1zM141,405h1v1h-1zM142,404h1v2h-1zM143,404h1v2h-1zM144,405h1v2h-1zM145,406h1v1h-1zM146,405h1v2h-1zM147,405h1v2h-1zM148,406h1v1h-1zM149,403h1v3h-1zM150,401h1v3h-1zM151,401h1v1h-1zM152,400h1v2h-1zM153,397h1v3h-1zM154,397h1v1h-1zM155,397h1v1h-1zM156,396h1v2h-1zM157,395h1v2h-1zM158,395h1v2h-1zM159,396h1v1h-1zM160,396h1v1h-1zM161,395h1v1h-1zM162,395h1v2h-1zM163,397h1v1h-1zM164,397h1v1h-1zM165,396h1v2h-1zM166,397h1v2h-1zM167,398h1v2h-1zM168,398h1v1h-1zM169,398h1v2h-1zM170,400h1v2h-1zM171,401h1v1h-1zM172,401h1v2h-1zM173,402h1v3h-1zM174,404h1v3h-1zM175,405h1v2h-1zM176,405h1v2h-1zM177,406h1v2h-1zM178,407h1v1h-1zM179,405h1v2h-1zM180,404h1v2h-1zM181,404h1v1h-1zM182,403h1v2h-1zM183,401h1v2h-1zM184,401h1v1h-1zM185,401h1v1h-1zM186,399h1v2h-1zM187,397h1v2h-1zM188,397h1v1h-1zM189,396h1v2h-1zM190,394h1v3h-1zM191,394h1v1h-1zM192,394h1v1h-1zM193,394h1v1h-1zM194,393h1v2h-1zM195,393h1v2h-1zM196,395h1v2h-1zM197,396h1v1h-1zM198,396h1v1h-1zM199,397h1v2h-1zM200,399h1v1h-1zM201,399h1v1h-1zM202,399h1v3h-1zM203,401h1v3h-1zM204,403h1v2h-1zM205,404h1v1h-1zM206,405h1v2h-1zM207,407h1v2h-1zM208,408h1v1h-1zM209,408h1v1h-1zM210,408h1v2h-1zM211,409h1v1h-1zM212,407h1v3h-1zM213,407h1v1h-1zM214,407h1v1h-1zM215,407h1v1h-1zM216,405h1v2h-1zM217,404h1v2h-1zM218,404h1v2h-1zM219,402h1v3h-1zM220,400h1v3h-1zM221,400h1v1h-1zM222,399h1v2h-1zM223,397h1v3h-1zM224,396h1v2h-1zM225,396h1v2h-1zM226,397h1v1h-1zM227,396h1v2h-1zM228,396h1v1h-1zM229,397h1v2h-1zM230,397h1v2h-1zM231,397h1v1h-1zM232,397h1v2h-1zM233,398h1v2h-1zM234,399h1v1h-1zM235,399h1v1h-1zM236,400h1v2h-1zM237,402h1v2h-1zM238,403h1v1h-1zM239,403h1v2h-1zM240,404h1v2h-1zM241,405h1v2h-1zM242,405h1v1h-1zM243,405h1v2h-1zM244,406h1v2h-1zM245,406h1v2h-1zM246,406h1v1h-1zM247,406h1v2h-1zM248,407h1v1h-1zM249,406h1v2h-1zM250,405h1v2h-1zM251,405h1v2h-1zM252,404h1v2h-1zM253,402h1v3h-1zM254,402h1v1h-1zM255,402h1v1h-1zM256,401h1v2h-1zM257,399h1v2h-1zM258,399h1v2h-1zM259,400h1v1h-1zM260,398h1v3h-1zM261,397h1v2h-1zM262,397h1v2h-1zM263,397h1v2h-1zM264,396h1v2h-1zM265,396h1v1h-1zM266,396h1v2h-1zM267,397h1v2h-1zM268,397h1v2h-1zM269,398h1v2h-1zM270,400h1v2h-1zM271,401h1v1h-1zM272,401h1v2h-1zM273,402h1v3h-1zM274,404h1v2h-1zM275,405h1v1h-1zM276,405h1v2h-1zM277,407h1v3h-1zM278,409h1v1h-1zM279,409h1v1h-1zM280,410h1v2h-1zM281,411h1v2h-1zM282,411h1v2h-1zM283,410h1v2h-1zM284,410h1v1h-1zM285,410h1v1h-1zM286,408h1v2h-1zM287,407h1v1h-1zM288,407h1v1h-1zM289,405h1v2h-1zM290,403h1v3h-1zM291,401h1v2h-1zM292,401h1v1h-1zM293,398h1v3h-1zM294,396h1v3h-1zM295,396h1v1h-1zM296,396h1v1h-1zM297,395h1v2h-1zM298,395h1v1h-1zM299,395h1v3h-1zM300,397h1v2h-1zM301,398h1v1h-1zM302,398h1v3h-1zM303,400h1v4h-1zM304,403h1v2h-1zM305,404h1v2h-1zM306,405h1v3h-1zM307,408h1v3h-1zM308,410h1v2h-1zM309,411h1v2h-1zM310,412h1v3h-1zM311,414h1v1h-1zM312,413h1v2h-1zM313,413h1v1h-1zM314,413h1v2h-1zM315,413h1v2h-1zM316,412h1v2h-1zM317,412h1v2h-1zM318,413h1v1h-1zM319,411h1v3h-1zM320,410h1v2h-1zM321,410h1v1h-1zM322,409h1v2h-1zM323,406h1v3h-1zM324,404h1v3h-1zM325,404h1v1h-1zM326,402h1v3h-1zM327,400h1v3h-1zM328,400h1v1h-1zM329,400h1v2h-1zM330,400h1v2h-1zM331,399h1v2h-1zM332,399h1v2h-1zM333,401h1v1h-1zM334,400h1v2h-1zM335,400h1v1h-1zM336,400h1v3h-1zM337,402h1v1h-1zM338,402h1v2h-1zM339,403h1v2h-1zM340,405h1v2h-1zM341,406h1v2h-1zM342,407h1v1h-1zM343,407h1v3h-1zM344,409h1v1h-1zM345,409h1v1h-1zM346,409h1v1h-1zM347,409h1v2h-1zM348,410h1v2h-1zM349,410h1v1h-1zM350,410h1v1h-1zM351,410h1v2h-1zM352,410h1v2h-1zM353,409h1v2h-1zM354,408h1v2h-1zM355,408h1v1h-1zM356,406h1v3h-1zM357,404h1v3h-1zM358,404h1v1h-1zM359,404h1v1h-1zM360,402h1v3h-1zM361,401h1v2h-1zM362,401h1v2h-1zM363,400h1v2h-1zM364,398h1v3h-1zM365,398h1v1h-1zM366,398h1v1h-1zM367,396h1v3h-1zM368,396h1v1h-1zM369,396h1v2h-1zM370,397h1v1h-1zM371,397h1v1h-1zM372,397h1v2h-1zM373,398h1v3h-1zM374,400h1v2h-1zM375,401h1v1h-1zM376,401h1v3h-1zM377,403h1v3h-1zM378,405h1v1h-1zM379,405h1v1h-1zM380,405h1v2h-1zM381,407h1v1h-1zM382,406h1v2h-1zM383,405h1v2h-1zM384,405h1v2h-1zM385,405h1v2h-1zM386,402h1v3h-1zM387,402h1v1h-1zM388,402h1v1h-1zM389,400h1v2h-1zM390,399h1v2h-1zM391,399h1v1h-1zM392,399h1v2h-1zM393,398h1v2h-1zM394,397h1v2h-1zM395,398h1v1h-1zM396,398h1v1h-1zM397,397h1v2h-1zM398,397h1v2h-1zM399,398h1v3h-1zM400,400h1v2h-1zM401,401h1v1h-1zM402,401h1v3h-1zM403,404h1v2h-1zM404,405h1v2h-1zM405,406h1v1h-1zM406,406h1v3h-1zM407,408h1v2h-1zM408,409h1v1h-1zM409,409h1v2h-1zM410,410h1v2h-1zM411,411h1v2h-1zM412,411h1v1h-1zM413,411h1v1h-1zM414,411h1v2h-1zM415,410h1v3h-1zM416,409h1v2h-1zM417,409h1v1h-1zM418,408h1v2h-1zM419,405h1v3h-1zM420,404h1v2h-1zM421,404h1v2h-1zM422,403h1v2h-1zM423,402h1v2h-1zM424,401h1v1h-1zM425,401h1v1h-1zM426,399h1v3h-1zM427,398h1v2h-1zM428,397h1v2h-1zM429,398h1v1h-1zM430,397h1v2h-1zM431,397h1v1h-1zM432,397h1v3h-1zM433,399h1v2h-1zM434,400h1v1h-1zM435,400h1v3h-1zM436,402h1v3h-1zM437,404h1v1h-1zM438,404h1v1h-1zM439,405h1v2h-1zM440,407h1v2h-1zM441,408h1v1h-1zM442,408h1v1h-1zM443,409h1v2h-1zM444,410h1v1h-1zM445,409h1v2h-1zM446,409h1v1h-1zM447,409h1v1h-1zM448,408h1v2h-1zM449,406h1v3h-1zM450,406h1v1h-1zM451,406h1v2h-1zM452,405h1v3h-1zM453,404h1v2h-1zM454,404h1v2h-1zM455,405h1v1h-1zM456,403h1v2h-1zM457,402h1v2h-1zM458,402h1v1h-1zM459,401h1v2h-1zM460,400h1v2h-1zM461,399h1v2h-1zM462,400h1v2h-1zM463,400h1v2h-1zM464,400h1v1h-1zM465,400h1v2h-1zM466,401h1v2h-1zM467,401h1v1h-1zM468,401h1v1h-1zM469,401h1v2h-1zM470,403h1v1h-1zM471,403h1v1h-1zM472,403h1v2h-1zM473,405h1v3h-1zM474,407h1v1h-1zM475,407h1v1h-1zM476,408h1v2h-1zM477,409h1v2h-1zM478,410h1v1h-1zM479,410h1v1h-1zM480,410h1v2h-1zM481,411h1v1h-1zM482,410h1v2h-1zM483,410h1v2h-1zM484,411h1v1h-1zM485,411h1v1h-1zM486,409h1v2h-1zM487,408h1v2h-1zM488,408h1v1h-1zM489,405h1v4h-1zM490,403h1v3h-1zM491,403h1v1h-1zM492,402h1v2h-1zM493,400h1v3h-1zM494,399h1v2h-1zM495,399h1v1h-1zM496,398h1v2h-1zM497,397h1v2h-1zM498,397h1v1h-1zM499,397h1v1h-1zM500,396h1v2h-1zM501,396h1v1h-1zM502,396h1v3h-1zM503,398h1v3h-1zM504,400h1v1h-1zM505,401h1v2h-1zM506,403h1v3h-1zM507,405h1v2h-1zM508,406h1v2h-1zM509,407h1v2h-1zM510,409h1v2h-1zM511,410h1v1h-1zM512,410h1v1h-1zM513,410h1v2h-1zM514,412h1v1h-1zM515,411h1v2h-1zM516,411h1v1h-1zM517,411h1v1h-1zM518,411h1v1h-1zM519,408h1v3h-1zM520,408h1v1h-1zM521,407h1v2h-1zM522,406h1v2h-1zM523,404h1v2h-1zM524,404h1v1h-1zM525,404h1v1h-1zM526,402h1v3h-1zM527,401h1v2h-1zM528,401h1v1h-1zM529,400h1v2h-1zM530,398h1v3h-1zM531,398h1v1h-1zM532,398h1v1h-1zM533,398h1v2h-1zM534,398h1v1h-1zM535,398h1v2h-1zM536,399h1v2h-1zM537,400h1v1h-1zM538,400h1v1h-1zM539,400h1v3h-1zM540,402h1v2h-1zM541,402h1v2h-1zM542,402h1v2h-1zM543,403h1v3h-1zM544,405h1v2h-1zM545,406h1v1h-1zM546,406h1v3h-1zM547,408h1v3h-1zM548,410h1v1h-1zM549,410h1v1h-1zM550,410h1v2h-1zM551,411h1v2h-1zM552,411h1v2h-1zM553,410h1v2h-1zM554,411h1v1h-1z" fill="#C00010" shape-rendering="crispEdges"/><path d="M72,234h1v3h-1zM73,232h1v3h-1zM74,230h1v3h-1zM75,228h1v3h-1zM76,227h1v7h-1zM77,234h1v4h-1zM78,238h1v7h-1zM79,241h1v6h-1zM80,238h1v3h-1zM81,235h1v4h-1zM82,233h1v3h-1zM83,230h1v3h-1zM84,227h1v4h-1zM85,226h1v6h-1zM86,232h1v6h-1zM87,237h1v7h-1zM88,241h1v6h-1zM89,238h1v3h-1zM90,235h1v4h-1zM91,233h1v3h-1zM92,230h1v3h-1zM93,227h1v4h-1zM94,226h1v4h-1zM95,230h1v6h-1zM96,235h1v6h-1zM97,240h1v5h-1zM98,237h1v3h-1zM99,235h1v3h-1zM100,233h1v3h-1zM101,231h1v2h-1zM102,228h1v3h-1zM103,227h1v4h-1zM104,231h1v6h-1zM105,237h1v5h-1zM106,242h1v4h-1zM107,239h1v4h-1zM108,236h1v3h-1zM109,233h1v4h-1zM110,231h1v3h-1zM111,228h1v3h-1zM112,226h1v3h-1zM113,229h1v8h-1zM114,236h1v5h-1zM115,241h1v6h-1zM116,239h1v5h-1zM117,237h1v3h-1zM118,235h1v3h-1zM119,233h1v3h-1zM120,230h1v3h-1zM121,229h1v2h-1zM122,230h1v7h-1zM123,237h1v3h-1zM124,240h1v6h-1zM125,239h1v5h-1zM126,237h1v3h-1zM127,235h1v3h-1zM128,232h1v3h-1zM129,230h1v3h-1zM130,227h1v3h-1zM131,229h1v9h-1zM132,237h1v4h-1zM133,241h1v8h-1zM134,241h1v6h-1zM135,238h1v4h-1zM136,236h1v3h-1zM137,233h1v3h-1zM138,230h1v3h-1zM139,227h1v4h-1zM140,227h1v10h-1zM141,237h1v3h-1zM142,240h1v9h-1zM143,241h1v7h-1zM144,239h1v3h-1zM145,236h1v3h-1zM146,233h1v4h-1zM147,230h1v4h-1zM148,227h1v4h-1zM149,227h1v8h-1zM150,235h1v4h-1zM151,238h1v9h-1zM152,241h1v7h-1zM153,238h1v3h-1zM154,236h1v3h-1zM155,233h1v3h-1zM156,231h1v3h-1zM157,228h1v4h-1zM158,228h1v7h-1zM159,235h1v4h-1zM160,239h1v8h-1zM161,242h1v6h-1zM162,239h1v3h-1zM163,237h1v3h-1zM164,234h1v3h-1zM165,232h1v3h-1zM166,229h1v3h-1zM167,228h1v6h-1zM168,234h1v5h-1zM169,239h1v7h-1zM170,242h1v6h-1zM171,240h1v3h-1zM172,237h1v3h-1zM173,234h1v4h-1zM174,232h1v3h-1zM175,229h1v3h-1zM176,227h1v6h-1zM177,233h1v6h-1zM178,238h1v7h-1zM179,243h1v5h-1zM180,240h1v3h-1zM181,237h1v4h-1zM182,235h1v3h-1zM183,232h1v3h-1zM184,229h1v4h-1zM185,228h1v4h-1zM186,232h1v7h-1zM187,238h1v6h-1zM188,244h1v4h-1zM189,240h1v4h-1zM190,238h1v3h-1zM191,235h1v4h-1zM192,233h1v3h-1zM193,231h1v3h-1zM194,229h1v3h-1zM195,232h1v7h-1zM196,238h1v5h-1zM197,243h1v5h-1zM198,241h1v4h-1zM199,238h1v3h-1zM200,235h1v4h-1zM201,232h1v4h-1zM202,230h1v3h-1zM203,227h1v3h-1zM204,230h1v8h-1zM205,237h1v5h-1zM206,242h1v7h-1zM207,241h1v5h-1zM208,238h1v3h-1zM209,235h1v4h-1zM210,232h1v4h-1zM211,229h1v4h-1zM212,227h1v3h-1zM213,228h1v9h-1zM214,236h1v4h-1zM215,240h1v8h-1zM216,240h1v6h-1zM217,238h1v3h-1zM218,235h1v3h-1zM219,232h1v4h-1zM220,230h1v3h-1zM221,227h1v3h-1zM222,227h1v9h-1zM223,236h1v4h-1zM224,239h1v9h-1zM225,241h1v6h-1zM226,238h1v4h-1zM227,236h1v3h-1zM228,233h1v4h-1zM229,231h1v3h-1zM230,228h1v4h-1zM231,228h1v9h-1zM232,237h1v4h-1zM233,241h1v9h-1zM234,243h1v8h-1zM235,240h1v4h-1zM236,237h1v4h-1zM237,234h1v4h-1zM238,231h1v4h-1zM239,228h1v4h-1zM240,227h1v8h-1zM241,235h1v5h-1zM242,240h1v9h-1zM243,243h1v8h-1zM244,241h1v3h-1zM245,238h1v3h-1zM246,235h1v4h-1zM247,233h1v3h-1zM248,230h1v3h-1zM249,229h1v6h-1zM250,235h1v5h-1zM251,239h1v7h-1zM252,242h1v6h-1zM253,240h1v3h-1zM254,237h1v3h-1zM255,235h1v3h-1zM256,233h1v3h-1zM257,230h1v3h-1zM258,229h1v6h-1zM259,235h1v5h-1zM260,240h1v6h-1zM261,245h1v5h-1zM262,241h1v4h-1zM263,239h1v3h-1zM264,236h1v3h-1zM265,234h1v3h-1zM266,231h1v3h-1zM267,229h1v5h-1zM268,234h1v6h-1zM269,240h1v6h-1zM270,246h1v4h-1zM271,242h1v4h-1zM272,239h1v3h-1zM273,236h1v4h-1zM274,234h1v3h-1zM275,231h1v3h-1zM276,229h1v3h-1zM277,232h1v8h-1zM278,240h1v5h-1zM279,245h1v6h-1zM280,242h1v5h-1zM281,239h1v4h-1zM282,236h1v4h-1zM283,233h1v4h-1zM284,230h1v4h-1zM285,227h1v4h-1zM286,230h1v9h-1zM287,238h1v5h-1zM288,243h1v8h-1zM289,242h1v5h-1zM290,239h1v4h-1zM291,236h1v4h-1zM292,234h1v3h-1zM293,231h1v3h-1zM294,229h1v3h-1zM295,230h1v10h-1zM296,239h1v4h-1zM297,243h1v9h-1zM298,243h1v7h-1zM299,241h1v3h-1zM300,238h1v3h-1zM301,235h1v4h-1zM302,233h1v3h-1zM303,230h1v3h-1zM304,230h1v10h-1zM305,239h1v4h-1zM306,242h1v10h-1zM307,244h1v7h-1zM308,241h1v4h-1zM309,238h1v3h-1zM310,234h1v4h-1zM311,231h1v4h-1zM312,228h1v4h-1zM313,228h1v10h-1zM314,238h1v4h-1zM315,241h1v11h-1zM316,244h1v8h-1zM317,241h1v4h-1zM318,239h1v3h-1zM319,236h1v3h-1zM320,233h1v3h-1zM321,230h1v3h-1zM322,229h1v8h-1zM323,237h1v5h-1zM324,241h1v9h-1zM325,244h1v7h-1zM326,242h1v3h-1zM327,239h1v3h-1zM328,236h1v3h-1zM329,233h1v4h-1zM330,231h1v3h-1zM331,230h1v7h-1zM332,237h1v6h-1zM333,242h1v9h-1zM334,246h1v7h-1zM335,243h1v4h-1zM336,240h1v4h-1zM337,236h1v4h-1zM338,233h1v4h-1zM339,229h1v4h-1zM340,227h1v6h-1zM341,233h1v7h-1zM342,239h1v8h-1zM343,244h1v6h-1zM344,241h1v3h-1zM345,238h1v4h-1zM346,236h1v3h-1zM347,233h1v3h-1zM348,230h1v3h-1zM349,228h1v5h-1zM350,233h1v7h-1zM351,239h1v7h-1zM352,245h1v5h-1zM353,242h1v3h-1zM354,239h1v3h-1zM355,237h1v3h-1zM356,234h1v3h-1zM357,232h1v3h-1zM358,230h1v3h-1zM359,233h1v8h-1zM360,241h1v5h-1zM361,246h1v6h-1zM362,243h1v5h-1zM363,240h1v4h-1zM364,238h1v3h-1zM365,235h1v3h-1zM366,232h1v3h-1zM367,230h1v2h-1zM368,232h1v9h-1zM369,240h1v6h-1zM370,246h1v7h-1zM371,244h1v6h-1zM372,241h1v4h-1zM373,238h1v4h-1zM374,235h1v3h-1zM375,232h1v3h-1zM376,229h1v3h-1zM377,230h1v10h-1zM378,240h1v4h-1zM379,244h1v9h-1zM380,244h1v7h-1zM381,241h1v4h-1zM382,238h1v4h-1zM383,235h1v4h-1zM384,232h1v4h-1zM385,229h1v4h-1zM386,229h1v11h-1zM387,239h1v4h-1zM388,243h1v10h-1zM389,245h1v7h-1zM390,242h1v3h-1zM391,238h1v4h-1zM392,235h1v4h-1zM393,232h1v4h-1zM394,229h1v4h-1zM395,229h1v10h-1zM396,239h1v4h-1zM397,243h1v11h-1zM398,246h1v8h-1zM399,242h1v4h-1zM400,239h1v4h-1zM401,236h1v4h-1zM402,233h1v4h-1zM403,230h1v3h-1zM404,229h1v8h-1zM405,237h1v5h-1zM406,241h1v9h-1zM407,244h1v7h-1zM408,241h1v4h-1zM409,238h1v4h-1zM410,235h1v4h-1zM411,232h1v4h-1zM412,229h1v4h-1zM413,228h1v8h-1zM414,236h1v6h-1zM415,242h1v9h-1zM416,246h1v7h-1zM417,243h1v4h-1zM418,239h1v4h-1zM419,236h1v4h-1zM420,233h1v4h-1zM421,230h1v4h-1zM422,228h1v7h-1zM423,235h1v7h-1zM424,242h1v9h-1zM425,248h1v7h-1zM426,244h1v4h-1zM427,240h1v4h-1zM428,237h1v4h-1zM429,233h1v4h-1zM430,230h1v4h-1zM431,228h1v6h-1zM432,234h1v7h-1zM433,241h1v7h-1zM434,248h1v6h-1zM435,244h1v4h-1zM436,241h1v3h-1zM437,238h1v4h-1zM438,235h1v4h-1zM439,232h1v4h-1zM440,231h1v4h-1zM441,235h1v8h-1zM442,243h1v7h-1zM443,250h1v6h-1zM444,246h1v5h-1zM445,242h1v5h-1zM446,239h1v4h-1zM447,235h1v4h-1zM448,232h1v4h-1zM449,229h1v3h-1zM450,232h1v9h-1zM451,240h1v5h-1zM452,245h1v8h-1zM453,244h1v5h-1zM454,241h1v3h-1zM455,238h1v4h-1zM456,235h1v4h-1zM457,232h1v4h-1zM458,230h1v3h-1zM459,231h1v11h-1zM460,241h1v5h-1zM461,246h1v9h-1zM462,246h1v7h-1zM463,243h1v4h-1zM464,240h1v4h-1zM465,237h1v4h-1zM466,234h1v4h-1zM467,231h1v4h-1zM468,231h1v10h-1zM469,241h1v3h-1zM470,244h1v9h-1zM471,246h1v6h-1zM472,242h1v4h-1zM473,239h1v4h-1zM474,236h1v4h-1zM475,233h1v4h-1zM476,230h1v4h-1zM477,229h1v11h-1zM478,240h1v5h-1zM479,244h1v11h-1zM480,247h1v8h-1zM481,243h1v5h-1zM482,240h1v4h-1zM483,236h1v4h-1zM484,233h1v4h-1zM485,229h1v4h-1zM486,228h1v10h-1zM487,238h1v5h-1zM488,242h1v10h-1zM489,245h1v8h-1zM490,242h1v4h-1zM491,239h1v4h-1zM492,236h1v4h-1zM493,233h1v4h-1zM494,230h1v4h-1zM495,229h1v8h-1zM496,237h1v7h-1zM497,243h1v10h-1zM498,248h1v8h-1zM499,244h1v4h-1zM500,241h1v4h-1zM501,237h1v4h-1zM502,234h1v4h-1zM503,230h1v4h-1zM504,228h1v8h-1zM505,236h1v7h-1zM506,242h1v9h-1zM507,248h1v7h-1zM508,244h1v4h-1zM509,241h1v4h-1zM510,237h1v4h-1zM511,234h1v4h-1zM512,230h1v5h-1zM513,229h1v6h-1zM514,235h1v8h-1zM515,242h1v8h-1zM516,249h1v7h-1zM517,245h1v4h-1zM518,242h1v4h-1zM519,239h1v4h-1zM520,236h1v3h-1zM521,233h1v3h-1zM522,231h1v4h-1zM523,235h1v8h-1zM524,242h1v7h-1zM525,249h1v6h-1zM526,246h1v4h-1zM527,243h1v3h-1zM528,239h1v4h-1zM529,236h1v4h-1zM530,233h1v4h-1zM531,231h1v3h-1zM532,234h1v9h-1zM533,242h1v6h-1zM534,248h1v7h-1zM535,246h1v6h-1zM536,243h1v3h-1zM537,239h1v4h-1zM538,236h1v4h-1zM539,233h1v4h-1zM540,230h1v3h-1zM541,232h1v10h-1zM542,241h1v5h-1zM543,246h1v8h-1zM544,246h1v6h-1zM545,243h1v3h-1zM546,239h1v4h-1zM547,236h1v4h-1zM548,233h1v4h-1zM549,230h1v4h-1zM550,231h1v11h-1zM551,241h1v4h-1zM552,245h1v11h-1zM553,247h1v7h-1zM554,247h1v1h-1z" fill="#007B7B" shape-rendering="crispEdges"/></svg>
<div class="m" style="left:57px;top:93px;color:#420606;">Y1</div>
<div class="m" style="left:37px;top:105px;color:#420606;">1O.O</div>
<div class="m" style="left:44px;top:148px;color:#420606;">O.O</div>
<div class="m" style="left:30px;top:190px;color:#420606;">-1O.O</div>
<div class="m" style="left:30px;top:233px;color:#420606;">-2O.O</div>
<div class="m" style="left:30px;top:275px;color:#420606;">-3O.O</div>
<div class="m" style="left:30px;top:318px;color:#420606;">-4O.O</div>
<div class="m" style="left:30px;top:360px;color:#420606;">-5O.O</div>
<div class="m" style="left:30px;top:403px;color:#420606;">-6O.O</div>
<div class="m" style="left:30px;top:445px;color:#420606;">-7O.O</div>
<div class="m" style="left:30px;top:488px;color:#420606;">-8O.O</div>
<div class="m" style="left:30px;top:530px;color:#420606;">-9O.O</div>
<div class="m" style="left:77px;top:559px;color:#000;">2O26/O4/15</div>
<div class="m" style="left:77px;top:572px;color:#000;">8:O1:51.6</div>
<div class="m" style="left:219px;top:559px;color:#000;">2O26/O4/15</div>
<div class="m" style="left:219px;top:572px;color:#000;">11:51:41.6</div>
<div class="m" style="left:362px;top:559px;color:#000;">2O26/O4/15</div>
<div class="m" style="left:362px;top:572px;color:#000;">15:41:31.6</div>
<div class="m" style="left:503px;top:559px;color:#000;">2O26/O4/15</div>
<div class="m" style="left:503px;top:572px;color:#000;">19:31:21.6</div>
<div class="m" style="left:646px;top:559px;color:#000;">2O26/O4/15</div>
<div class="m" style="left:646px;top:572px;color:#000;">23:21:11.6</div>
<div class="m" style="left:788px;top:559px;color:#000;">2O26/O4/16</div>
<div class="m" style="left:788px;top:572px;color:#000;">3:11:O1.6</div>
<div class="m" style="left:931px;top:559px;color:#000;">2O26/O4/16</div>
<div class="m" style="left:931px;top:572px;color:#000;">7:OO:51.6</div>
<div class="m" style="left:17px;top:608px;color:#704008;">sMDF-DC2OOV(+3O)</div>
<div class="m" style="left:17px;top:621px;color:#704008;">CH1 [°C]</div>
<div class="m" style="left:17px;top:634px;color:#704008;">-5O.7</div>
<div class="m" style="left:182px;top:608px;color:#0A0A70;">MDF-394(R)(+1O)</div>
<div class="m" style="left:182px;top:621px;color:#0A0A70;">CH2 [°C]</div>
<div class="m" style="left:182px;top:634px;color:#0A0A70;">-85.3</div>
<div class="m" style="left:347px;top:621px;color:#187840;">CH3 [°C]</div>
<div class="m" style="left:347px;top:634px;color:#187840;">-----</div>
<div class="m" style="left:512px;top:608px;color:#E08020;">MDF-394AT(L)</div>
<div class="m" style="left:512px;top:621px;color:#E08020;">CH4 [°C]</div>
<div class="m" style="left:512px;top:634px;color:#E08020;">-81.4</div>
<div class="m" style="left:677px;top:608px;color:#C00010;">MDF-382(+2O)</div>
<div class="m" style="left:677px;top:621px;color:#C00010;">CH5 [°C]</div>
<div class="m" style="left:677px;top:634px;color:#C00010;">-61.2</div>
<div class="m" style="left:842px;top:608px;color:#007B7B;">MDF-437</div>
<div class="m" style="left:842px;top:621px;color:#007B7B;">CH6 [°C]</div>
<div class="m" style="left:842px;top:634px;color:#007B7B;">-22.9</div>
<div style="position:absolute;left:8px;top:664px;width:1008px;height:40px;background:#D4D0C8;box-shadow:inset 1px 1px #fff, inset -1px -1px #808080"></div>
<div style="position:absolute;left:16px;top:672px;width:81px;height:25px;background:#D4D0C8;box-shadow:inset -1px -1px #404040, inset 1px 1px #FFFFFF, inset -2px -2px #808080;"></div>
<div style="position:absolute;left:104px;top:672px;width:903px;height:26px;background:#fff;box-shadow:inset 1px 1px #808080, inset -1px -1px #fff, inset 2px 2px #404040, inset -2px -2px #D4D0C8"></div>
<div style="position:absolute;left:989px;top:674px;width:16px;height:22px;background:#D4D0C8;box-shadow:inset -1px -1px #404040, inset 1px 1px #FFFFFF, inset -2px -2px #808080;"></div>
<svg style="position:absolute;left:993px;top:682px" width="8" height="5"><path d="M0,0 H7 L3.5,4 Z" fill="#000"/></svg>
<div style="position:absolute;left:0px;top:719px;width:150px;height:19px;background:#D4D0C8;box-shadow:inset 1px 1px #808080, inset -1px -1px #fff"></div>
<div style="position:absolute;left:152px;top:719px;width:872px;height:19px;background:#D4D0C8;box-shadow:inset 1px 1px #808080, inset -1px -1px #fff"></div>
<div style="position:absolute;left:0px;top:738px;width:1024px;height:30px;background:#D4D0C8;box-shadow:inset 0 1px #D4D0C8, inset 0 2px #fff"></div>
<div style="position:absolute;left:2px;top:742px;width:62px;height:22px;background:#D4D0C8;box-shadow:inset -1px -1px #404040, inset 1px 1px #FFFFFF, inset -2px -2px #808080;"></div>
<svg style="position:absolute;left:5px;top:745px" width="16" height="16" viewBox="0 0 16 16">
<path d="M1,2 Q4,0 7,2 L6,7 Q3,5 0,7 Z" fill="#e8602a"/><path d="M8,2 Q11,0 15,2 L14,7 Q11,5 7,7 Z" fill="#60b830"/>
<path d="M0,8 Q3,6 6,8 L5,13 Q2,11 -1,13 Z" fill="#3a80e0"/><path d="M7,8 Q10,6 14,8 L13,14 Q10,12 6,14 Z" fill="#f0c020"/></svg>
<div style="position:absolute;left:71px;top:744px;width:1px;height:20px;background:#fff;"></div>
<div style="position:absolute;left:72px;top:744px;width:1px;height:20px;background:#808080;"></div>
<div style="position:absolute;left:154px;top:744px;width:1px;height:20px;background:#fff;"></div>
<div style="position:absolute;left:155px;top:744px;width:1px;height:20px;background:#808080;"></div>
<div style="position:absolute;left:848px;top:744px;width:1px;height:20px;background:#fff;"></div>
<div style="position:absolute;left:849px;top:744px;width:1px;height:20px;background:#808080;"></div>
<svg style="position:absolute;left:80px;top:745px" width="64" height="18">
<ellipse cx="8.5" cy="10" rx="7.5" ry="3.2" transform="rotate(-40 8.5 10)" fill="none" stroke="#5aa8e8" stroke-width="1.2"/>
<circle cx="8.5" cy="9" r="6" fill="#3a8ee0"/><path d="M5.5,8 Q8.5,4.5 11.5,8 Z" fill="#f0f8ff"/><path d="M5.5,10.5 Q8.5,13.5 12,11 L12,10.5 Z" fill="#f0f8ff"/>
<path d="M24,3 h5 l1.5,2 h7 v10 h-13.5 Z" fill="#e8c048" stroke="#a88020" stroke-width="0.8"/><path d="M24,6 h14 l2,3 l-2,6 h-14 Z" fill="#f0d060"/>
<circle cx="31" cy="9.5" r="3.2" fill="#d8ecf8" stroke="#90b0c0" stroke-width="0.6"/>
<rect x="47" y="1" width="15" height="15" rx="1" fill="#2a70c8"/><rect x="49" y="3" width="11" height="11" rx="3" fill="#e8f2ff"/><path d="M51.5,5.5 v5 h5" fill="none" stroke="#2a70c8" stroke-width="1.5"/><path d="M52,11 L58,5" stroke="#102040" stroke-width="1.4"/><circle cx="62" cy="5" r="1" fill="#e05020"/>
</svg>
<div style="left:160px;top:742px;width:160px;height:22px;background:repeating-conic-gradient(#fff 0 25%,#D4D0C8 0 50%) 0 0/2px 2px;box-shadow:inset 1px 1px #404040, inset -1px -1px #fff, inset 2px 2px #808080"></div>
<div style="left:165px;top:746px;width:16px;height:16px"><svg width="16" height="16" viewBox="0 0 16 16" shape-rendering="crispEdges">
<rect x="0" y="0" width="16" height="16" fill="#282828"/>
<rect x="1" y="1" width="14" height="7" fill="#f4f2f8"/>
<rect x="2" y="2" width="6" height="2" fill="#ffffff"/><rect x="8" y="2" width="5" height="1" fill="#b0a8e0"/><rect x="13" y="2" width="2" height="2" fill="#e8c8d8"/>
<rect x="2" y="4" width="5" height="1" fill="#a098d0"/><rect x="8" y="4" width="5" height="1" fill="#e0a8a0"/><rect x="12" y="3" width="2" height="2" fill="#503050"/>
<rect x="2" y="6" width="6" height="2" fill="#d8e0a8"/><rect x="8" y="6" width="7" height="2" fill="#b8e8b0"/>
<rect x="1" y="8" width="14" height="2" fill="#8a8a8a"/><rect x="2" y="9" width="3" height="1" fill="#f0f0f0"/><rect x="7" y="9" width="2" height="1" fill="#f0f0f0"/><rect x="11" y="9" width="3" height="1" fill="#f0f0f0"/>
<rect x="1" y="10" width="14" height="5" fill="#ffffff"/>
<rect x="4" y="11" width="3" height="3" fill="#c82020"/><rect x="8" y="11" width="3" height="3" fill="#1010b0"/><rect x="12" y="11" width="3" height="3" fill="#30d030"/>
</svg></div>
<div style="position:absolute;left:875px;top:742px;width:146px;height:22px;background:#D4D0C8;box-shadow:inset 1px 1px #808080, inset -1px -1px #fff"></div>
<svg style="position:absolute;left:856px;top:745px" width="170" height="18">
<path d="M7.5,7 V3.5 H15" fill="none" stroke="#000" stroke-dasharray="1 1"/>
<rect x="2.5" y="7.5" width="13" height="8" rx="1.5" fill="#fff" stroke="#000"/>
<path d="M5,10.5 h9 M5,12.5 h9" stroke="#404040" stroke-dasharray="1 1"/><rect x="3" y="15" width="13" height="1" fill="#000"/>
<path d="M28,6 l-3,3 l3,3 M32,6 l-3,3 l3,3" stroke="#000" stroke-width="1.5" fill="none"/>
<path d="M38,2 L45,0 L52,2 L52,9 Q52,14 45,17 Q38,14 38,9 Z" fill="#f0e040" stroke="#807020"/><rect x="44" y="5" width="2" height="5" fill="#000"/><rect x="44" y="11" width="2" height="2" fill="#000"/>
<path d="M56,2 L62,0 L68,2 L68,9 Q68,14 62,17 Q56,14 56,9 Z" fill="#d02030" stroke="#802020"/><path d="M59,6 L65,12 M65,6 L59,12" stroke="#fff" stroke-width="1.5"/>
<circle cx="80" cy="8" r="7" fill="#c8e0f8" stroke="#4070c0"/><rect x="79" y="6" width="3" height="7" fill="#1040a0"/><rect x="79" y="3" width="3" height="2" fill="#1040a0"/>
<rect x="91" y="1" width="16" height="16" fill="#0010c0"/><path d="M95,4 L104,9 L95,14 Z" fill="#fff"/>
<path d="M117,2 L119,7 L124,7 L120,10 L122,15 L117,12 L112,15 L114,10 L110,7 L115,7 Z" fill="#f0d040" stroke="#a08000"/>
</svg>
<div class="fit" style="left:987px;top:746px;width:27px;height:15px;font:11px/15px 'Liberation Sans', sans-serif;color:#000;white-space:pre;"><span style="display:inline-block;transform-origin:0 0">20:59</span></div>
<svg style="position:absolute;left:0;top:0" width="1024" height="768" shape-rendering="crispEdges"><path d="M42,3h2v1h-2zM53,3h1v1h-1zM57,3h2v1h-2zM85,3h3v1h-3zM91,3h2v1h-2zM96,3h1v1h-1zM99,3h3v1h-3zM105,3h1v1h-1zM119,3h4v1h-4zM126,3h2v1h-2zM131,3h1v1h-1zM134,3h3v1h-3zM140,3h1v1h-1zM170,3h4v1h-4zM176,3h2v1h-2zM182,3h3v1h-3zM189,3h1v1h-1zM199,3h2v1h-2zM205,3h1v1h-1zM213,3h1v1h-1zM217,3h3v1h-3zM254,3h4v1h-4zM20,4h2v1h-2zM28,4h1v1h-1zM31,4h9v1h-9zM42,4h2v1h-2zM52,4h2v1h-2zM57,4h2v1h-2zM73,4h9v1h-9zM84,4h5v1h-5zM91,4h2v1h-2zM96,4h6v1h-6zM103,4h1v1h-1zM105,4h1v1h-1zM119,4h4v1h-4zM126,4h2v1h-2zM131,4h6v1h-6zM138,4h3v1h-3zM143,4h4v1h-4zM170,4h4v1h-4zM176,4h2v1h-2zM180,4h5v1h-5zM188,4h2v1h-2zM192,4h3v1h-3zM199,4h2v1h-2zM203,4h6v1h-6zM213,4h2v1h-2zM217,4h4v1h-4zM222,4h8v1h-8zM232,4h9v1h-9zM247,4h4v1h-4zM255,4h3v1h-3zM20,5h2v1h-2zM27,5h2v1h-2zM31,5h9v1h-9zM42,5h2v1h-2zM51,5h9v1h-9zM74,5h8v1h-8zM84,5h5v1h-5zM91,5h2v1h-2zM97,5h3v1h-3zM101,5h1v1h-1zM103,5h1v1h-1zM105,5h1v1h-1zM118,5h6v1h-6zM126,5h2v1h-2zM131,5h4v1h-4zM136,5h5v1h-5zM142,5h5v1h-5zM170,5h2v1h-2zM175,5h6v1h-6zM187,5h3v1h-3zM191,5h5v1h-5zM198,5h2v1h-2zM201,5h1v1h-1zM203,5h6v1h-6zM212,5h6v1h-6zM232,5h9v1h-9zM247,5h4v1h-4zM257,5h1v1h-1zM21,6h2v1h-2zM27,6h2v1h-2zM38,6h2v1h-2zM42,6h2v1h-2zM50,6h11v1h-11zM76,6h1v1h-1zM84,6h10v1h-10zM95,6h2v1h-2zM98,6h4v1h-4zM103,6h1v1h-1zM105,6h1v1h-1zM119,6h10v1h-10zM130,6h2v1h-2zM133,6h8v1h-8zM145,6h2v1h-2zM170,6h2v1h-2zM175,6h4v1h-4zM180,6h1v1h-1zM187,6h5v1h-5zM194,6h2v1h-2zM199,6h3v1h-3zM203,6h6v1h-6zM211,6h3v1h-3zM217,6h2v1h-2zM221,6h10v1h-10zM239,6h2v1h-2zM249,6h2v1h-2zM257,6h1v1h-1zM21,7h2v1h-2zM27,7h2v1h-2zM38,7h2v1h-2zM42,7h5v1h-5zM52,7h2v1h-2zM57,7h2v1h-2zM62,7h10v1h-10zM73,7h10v1h-10zM84,7h11v1h-11zM96,7h4v1h-4zM101,7h1v1h-1zM103,7h1v1h-1zM105,7h1v1h-1zM119,7h11v1h-11zM131,7h4v1h-4zM136,7h5v1h-5zM145,7h2v1h-2zM170,7h2v1h-2zM176,7h2v1h-2zM180,7h6v1h-6zM188,7h3v1h-3zM194,7h2v1h-2zM199,7h10v1h-10zM210,7h3v1h-3zM216,7h2v1h-2zM221,7h10v1h-10zM239,7h2v1h-2zM249,7h2v1h-2zM257,7h1v1h-1zM26,8h3v1h-3zM38,8h1v1h-1zM42,8h2v1h-2zM45,8h4v1h-4zM52,8h2v1h-2zM57,8h2v1h-2zM62,8h10v1h-10zM73,8h10v1h-10zM84,8h5v1h-5zM91,8h2v1h-2zM98,8h4v1h-4zM103,8h1v1h-1zM105,8h1v1h-1zM108,8h9v1h-9zM119,8h4v1h-4zM126,8h2v1h-2zM133,8h8v1h-8zM145,8h2v1h-2zM154,8h9v1h-9zM170,8h2v1h-2zM176,8h5v1h-5zM183,8h2v1h-2zM188,8h2v1h-2zM194,8h2v1h-2zM198,8h11v1h-11zM210,8h1v1h-1zM216,8h2v1h-2zM229,8h2v1h-2zM239,8h2v1h-2zM249,8h2v1h-2zM257,8h1v1h-1zM26,9h2v1h-2zM37,9h2v1h-2zM42,9h2v1h-2zM47,9h2v1h-2zM52,9h2v1h-2zM57,9h2v1h-2zM76,9h1v1h-1zM85,9h3v1h-3zM91,9h2v1h-2zM97,9h3v1h-3zM101,9h1v1h-1zM103,9h1v1h-1zM105,9h1v1h-1zM120,9h3v1h-3zM126,9h2v1h-2zM132,9h3v1h-3zM136,9h5v1h-5zM145,9h2v1h-2zM170,9h2v1h-2zM175,9h4v1h-4zM180,9h1v1h-1zM183,9h2v1h-2zM187,9h3v1h-3zM194,9h2v1h-2zM198,9h11v1h-11zM215,9h2v1h-2zM229,9h2v1h-2zM238,9h2v1h-2zM249,9h2v1h-2zM257,9h1v1h-1zM25,10h2v1h-2zM36,10h2v1h-2zM42,10h2v1h-2zM56,10h2v1h-2zM76,10h1v1h-1zM84,10h5v1h-5zM91,10h2v1h-2zM96,10h6v1h-6zM103,10h1v1h-1zM105,10h1v1h-1zM119,10h5v1h-5zM126,10h2v1h-2zM131,10h6v1h-6zM138,10h3v1h-3zM145,10h2v1h-2zM170,10h2v1h-2zM176,10h2v1h-2zM179,10h2v1h-2zM183,10h2v1h-2zM186,10h4v1h-4zM194,10h1v1h-1zM196,10h1v1h-1zM198,10h10v1h-10zM214,10h3v1h-3zM228,10h2v1h-2zM237,10h3v1h-3zM249,10h2v1h-2zM257,10h1v1h-1zM23,11h3v1h-3zM34,11h3v1h-3zM42,11h2v1h-2zM55,11h3v1h-3zM76,11h2v1h-2zM84,11h2v1h-2zM87,11h2v1h-2zM91,11h2v1h-2zM96,11h2v1h-2zM99,11h1v1h-1zM101,11h1v1h-1zM105,11h1v1h-1zM119,11h2v1h-2zM122,11h2v1h-2zM126,11h2v1h-2zM131,11h4v1h-4zM136,11h1v1h-1zM139,11h2v1h-2zM145,11h2v1h-2zM170,11h2v1h-2zM176,11h2v1h-2zM179,11h2v1h-2zM183,11h2v1h-2zM186,11h4v1h-4zM194,11h15v1h-15zM212,11h4v1h-4zM226,11h3v1h-3zM235,11h4v1h-4zM249,11h2v1h-2zM257,11h1v1h-1zM22,12h3v1h-3zM32,12h4v1h-4zM42,12h2v1h-2zM54,12h3v1h-3zM76,12h6v1h-6zM84,12h5v1h-5zM91,12h2v1h-2zM95,12h2v1h-2zM98,12h2v1h-2zM101,12h5v1h-5zM119,12h5v1h-5zM126,12h2v1h-2zM130,12h2v1h-2zM133,12h2v1h-2zM136,12h5v1h-5zM145,12h2v1h-2zM170,12h4v1h-4zM175,12h3v1h-3zM179,12h2v1h-2zM183,12h2v1h-2zM188,12h2v1h-2zM194,12h3v1h-3zM198,12h3v1h-3zM202,12h2v1h-2zM205,12h4v1h-4zM211,12h3v1h-3zM223,12h5v1h-5zM234,12h3v1h-3zM249,12h2v1h-2zM255,12h3v1h-3zM42,13h2v1h-2zM55,13h1v1h-1zM84,13h5v1h-5zM91,13h2v1h-2zM96,13h1v1h-1zM98,13h1v1h-1zM103,13h3v1h-3zM119,13h4v1h-4zM126,13h2v1h-2zM130,13h2v1h-2zM133,13h1v1h-1zM136,13h1v1h-1zM138,13h3v1h-3zM170,13h4v1h-4zM175,13h3v1h-3zM179,13h1v1h-1zM183,13h1v1h-1zM189,13h1v1h-1zM200,13h1v1h-1zM204,13h2v1h-2zM211,13h1v1h-1zM224,13h2v1h-2zM254,13h4v1h-4z" fill="#fff"/><path d="M60,22h1v1h-1zM47,23h1v1h-1zM51,23h1v1h-1zM53,23h1v1h-1zM59,23h1v1h-1zM62,23h5v1h-5zM68,23h1v1h-1zM28,24h6v1h-6zM47,24h1v1h-1zM51,24h1v1h-1zM53,24h1v1h-1zM59,24h1v1h-1zM62,24h1v1h-1zM33,25h1v1h-1zM36,25h5v1h-5zM46,25h1v1h-1zM51,25h1v1h-1zM53,25h1v1h-1zM62,25h1v1h-1zM69,25h1v1h-1zM33,26h1v1h-1zM41,26h1v1h-1zM45,26h2v1h-2zM51,26h1v1h-1zM53,26h1v1h-1zM58,26h1v1h-1zM62,26h1v1h-1zM69,26h1v1h-1zM33,27h1v1h-1zM40,27h1v1h-1zM44,27h3v1h-3zM51,27h1v1h-1zM53,27h1v1h-1zM56,27h1v1h-1zM58,27h1v1h-1zM62,27h1v1h-1zM69,27h1v1h-1zM33,28h1v1h-1zM38,28h3v1h-3zM43,28h1v1h-1zM46,28h1v1h-1zM51,28h1v1h-1zM53,28h1v1h-1zM56,28h1v1h-1zM58,28h1v1h-1zM62,28h4v1h-4zM69,28h1v1h-1zM33,29h1v1h-1zM38,29h1v1h-1zM46,29h1v1h-1zM51,29h1v1h-1zM53,29h1v1h-1zM58,29h1v1h-1zM62,29h1v1h-1zM69,29h1v1h-1zM32,30h1v1h-1zM38,30h1v1h-1zM46,30h1v1h-1zM50,30h1v1h-1zM53,30h1v1h-1zM55,30h1v1h-1zM62,30h1v1h-1zM69,30h1v1h-1zM31,31h1v1h-1zM46,31h1v1h-1zM50,31h1v1h-1zM53,31h2v1h-2zM59,31h1v1h-1zM62,31h1v1h-1zM29,32h2v1h-2zM37,32h1v1h-1zM46,32h1v1h-1zM53,32h1v1h-1zM59,32h1v1h-1zM62,32h1v1h-1zM68,32h1v1h-1zM60,33h1v1h-1z" fill="#fff"/><rect x="59" y="34" width="7" height="1" fill="#fff"/><path d="M59,21h1v1h-1zM46,22h1v1h-1zM50,22h1v1h-1zM52,22h1v1h-1zM58,22h1v1h-1zM61,22h5v1h-5zM67,22h1v1h-1zM27,23h6v1h-6zM46,23h1v1h-1zM50,23h1v1h-1zM52,23h1v1h-1zM58,23h1v1h-1zM61,23h1v1h-1zM32,24h1v1h-1zM35,24h5v1h-5zM45,24h1v1h-1zM50,24h1v1h-1zM52,24h1v1h-1zM61,24h1v1h-1zM68,24h1v1h-1zM32,25h1v1h-1zM40,25h1v1h-1zM44,25h2v1h-2zM50,25h1v1h-1zM52,25h1v1h-1zM57,25h1v1h-1zM61,25h1v1h-1zM68,25h1v1h-1zM32,26h1v1h-1zM39,26h1v1h-1zM43,26h3v1h-3zM50,26h1v1h-1zM52,26h1v1h-1zM55,26h1v1h-1zM57,26h1v1h-1zM61,26h1v1h-1zM68,26h1v1h-1zM32,27h1v1h-1zM37,27h3v1h-3zM42,27h1v1h-1zM45,27h1v1h-1zM50,27h1v1h-1zM52,27h1v1h-1zM55,27h1v1h-1zM57,27h1v1h-1zM61,27h4v1h-4zM68,27h1v1h-1zM32,28h1v1h-1zM37,28h1v1h-1zM45,28h1v1h-1zM50,28h1v1h-1zM52,28h1v1h-1zM57,28h1v1h-1zM61,28h1v1h-1zM68,28h1v1h-1zM31,29h1v1h-1zM37,29h1v1h-1zM45,29h1v1h-1zM49,29h1v1h-1zM52,29h1v1h-1zM54,29h1v1h-1zM61,29h1v1h-1zM68,29h1v1h-1zM30,30h1v1h-1zM45,30h1v1h-1zM49,30h1v1h-1zM52,30h2v1h-2zM58,30h1v1h-1zM61,30h1v1h-1zM28,31h2v1h-2zM36,31h1v1h-1zM45,31h1v1h-1zM52,31h1v1h-1zM58,31h1v1h-1zM61,31h1v1h-1zM67,31h1v1h-1zM59,32h1v1h-1z" fill="#808080"/><rect x="58" y="33" width="7" height="1" fill="#808080"/><path d="M89,21h1v1h-1zM108,21h1v1h-1zM120,21h1v1h-1zM85,22h8v1h-8zM96,22h7v1h-7zM108,22h1v1h-1zM111,22h5v1h-5zM121,22h1v1h-1zM89,23h1v1h-1zM107,23h1v1h-1zM111,23h1v1h-1zM115,23h2v1h-2zM121,23h1v1h-1zM85,24h8v1h-8zM107,24h1v1h-1zM111,24h1v1h-1zM117,24h1v1h-1zM89,25h1v1h-1zM95,25h10v1h-10zM106,25h1v1h-1zM111,25h1v1h-1zM117,25h1v1h-1zM122,25h1v1h-1zM84,26h10v1h-10zM99,26h1v1h-1zM106,26h1v1h-1zM111,26h1v1h-1zM117,26h1v1h-1zM122,26h1v1h-1zM87,27h3v1h-3zM92,27h1v1h-1zM99,27h1v1h-1zM106,27h1v1h-1zM111,27h1v1h-1zM117,27h1v1h-1zM122,27h1v1h-1zM86,28h2v1h-2zM90,28h3v1h-3zM96,28h1v1h-1zM99,28h1v1h-1zM102,28h1v1h-1zM106,28h1v1h-1zM111,28h1v1h-1zM117,28h1v1h-1zM122,28h1v1h-1zM84,29h2v1h-2zM87,29h1v1h-1zM90,29h2v1h-2zM96,29h1v1h-1zM99,29h1v1h-1zM103,29h1v1h-1zM107,29h1v1h-1zM111,29h1v1h-1zM117,29h1v1h-1zM87,30h1v1h-1zM91,30h1v1h-1zM95,30h1v1h-1zM99,30h1v1h-1zM103,30h1v1h-1zM107,30h1v1h-1zM111,30h1v1h-1zM116,30h1v1h-1zM121,30h1v1h-1zM87,31h3v1h-3zM92,31h2v1h-2zM95,31h1v1h-1zM99,31h1v1h-1zM108,31h1v1h-1zM111,31h5v1h-5zM121,31h1v1h-1zM86,32h2v1h-2zM98,32h2v1h-2zM108,32h1v1h-1zM120,32h1v1h-1z" fill="#000"/><rect x="112" y="33" width="7" height="1" fill="#000"/><path d="M144,21h2v1h-2zM154,21h1v1h-1zM163,21h1v1h-1zM174,21h1v1h-1zM143,22h4v1h-4zM150,22h8v1h-8zM162,22h1v1h-1zM166,22h6v1h-6zM175,22h1v1h-1zM138,23h4v1h-4zM143,23h1v1h-1zM146,23h1v1h-1zM149,23h2v1h-2zM157,23h2v1h-2zM162,23h1v1h-1zM170,23h2v1h-2zM175,23h1v1h-1zM143,24h1v1h-1zM146,24h2v1h-2zM149,24h1v1h-1zM158,24h1v1h-1zM161,24h1v1h-1zM170,24h1v1h-1zM139,25h3v1h-3zM143,25h1v1h-1zM146,25h2v1h-2zM151,25h6v1h-6zM161,25h1v1h-1zM169,25h1v1h-1zM176,25h1v1h-1zM154,26h1v1h-1zM161,26h1v1h-1zM168,26h2v1h-2zM176,26h1v1h-1zM139,27h3v1h-3zM143,27h5v1h-5zM151,27h1v1h-1zM154,27h1v1h-1zM161,27h1v1h-1zM168,27h1v1h-1zM176,27h1v1h-1zM144,28h1v1h-1zM146,28h1v1h-1zM151,28h1v1h-1zM154,28h4v1h-4zM161,28h1v1h-1zM167,28h1v1h-1zM176,28h1v1h-1zM139,29h3v1h-3zM144,29h3v1h-3zM150,29h2v1h-2zM154,29h1v1h-1zM161,29h1v1h-1zM166,29h2v1h-2zM141,30h1v1h-1zM144,30h2v1h-2zM150,30h3v1h-3zM154,30h1v1h-1zM162,30h1v1h-1zM166,30h1v1h-1zM175,30h1v1h-1zM139,31h1v1h-1zM141,31h1v1h-1zM143,31h2v1h-2zM146,31h2v1h-2zM149,31h2v1h-2zM152,31h3v1h-3zM162,31h1v1h-1zM165,31h7v1h-7zM175,31h1v1h-1zM139,32h1v1h-1zM142,32h2v1h-2zM147,32h1v1h-1zM149,32h1v1h-1zM154,32h5v1h-5zM163,32h1v1h-1zM174,32h1v1h-1z" fill="#000"/><rect x="166" y="33" width="7" height="1" fill="#000"/><path d="M200,21h1v1h-1zM207,21h1v1h-1zM216,21h1v1h-1zM227,21h1v1h-1zM192,22h1v1h-1zM194,22h1v1h-1zM196,22h2v1h-2zM200,22h1v1h-1zM203,22h8v1h-8zM215,22h1v1h-1zM220,22h4v1h-4zM228,22h1v1h-1zM194,23h1v1h-1zM197,23h2v1h-2zM200,23h1v1h-1zM203,23h1v1h-1zM211,23h1v1h-1zM215,23h1v1h-1zM219,23h1v1h-1zM228,23h1v1h-1zM194,24h5v1h-5zM200,24h1v1h-1zM203,24h1v1h-1zM211,24h1v1h-1zM215,24h1v1h-1zM219,24h1v1h-1zM191,25h2v1h-2zM194,25h1v1h-1zM197,25h2v1h-2zM200,25h1v1h-1zM204,25h7v1h-7zM214,25h1v1h-1zM219,25h1v1h-1zM229,25h1v1h-1zM192,26h1v1h-1zM194,26h1v1h-1zM196,26h3v1h-3zM200,26h1v1h-1zM207,26h1v1h-1zM214,26h1v1h-1zM220,26h2v1h-2zM229,26h1v1h-1zM194,27h1v1h-1zM196,27h3v1h-3zM200,27h1v1h-1zM204,27h1v1h-1zM207,27h1v1h-1zM214,27h1v1h-1zM222,27h2v1h-2zM229,27h1v1h-1zM194,28h1v1h-1zM197,28h2v1h-2zM200,28h1v1h-1zM204,28h1v1h-1zM207,28h4v1h-4zM214,28h1v1h-1zM224,28h1v1h-1zM229,28h1v1h-1zM192,29h1v1h-1zM194,29h3v1h-3zM198,29h1v1h-1zM200,29h1v1h-1zM203,29h2v1h-2zM207,29h1v1h-1zM215,29h1v1h-1zM224,29h1v1h-1zM192,30h1v1h-1zM196,30h1v1h-1zM200,30h1v1h-1zM203,30h3v1h-3zM207,30h1v1h-1zM215,30h1v1h-1zM219,30h1v1h-1zM224,30h1v1h-1zM228,30h1v1h-1zM191,31h2v1h-2zM194,31h1v1h-1zM197,31h1v1h-1zM200,31h1v1h-1zM203,31h1v1h-1zM205,31h3v1h-3zM215,31h1v1h-1zM219,31h5v1h-5zM228,31h1v1h-1zM191,32h1v1h-1zM199,32h2v1h-2zM202,32h1v1h-1zM207,32h5v1h-5zM216,32h1v1h-1zM227,32h1v1h-1z" fill="#000"/><rect x="219" y="33" width="7" height="1" fill="#000"/><path d="M281,21h1v1h-1zM295,21h1v1h-1zM246,22h1v1h-1zM262,22h1v1h-1zM267,22h2v1h-2zM274,22h1v1h-1zM280,22h1v1h-1zM283,22h1v1h-1zM292,22h2v1h-2zM295,22h2v1h-2zM245,23h3v1h-3zM256,23h1v1h-1zM262,23h1v1h-1zM267,23h1v1h-1zM273,23h3v1h-3zM280,23h1v1h-1zM283,23h1v1h-1zM288,23h1v1h-1zM292,23h1v1h-1zM296,23h1v1h-1zM244,24h1v1h-1zM247,24h2v1h-2zM253,24h1v1h-1zM262,24h1v1h-1zM272,24h1v1h-1zM275,24h2v1h-2zM279,24h1v1h-1zM283,24h1v1h-1zM287,24h2v1h-2zM292,24h1v1h-1zM296,24h1v1h-1zM244,25h1v1h-1zM248,25h1v1h-1zM252,25h1v1h-1zM259,25h1v1h-1zM262,25h1v1h-1zM272,25h1v1h-1zM276,25h1v1h-1zM279,25h1v1h-1zM284,25h1v1h-1zM287,25h2v1h-2zM292,25h1v1h-1zM297,25h1v1h-1zM244,26h1v1h-1zM248,26h1v1h-1zM252,26h1v1h-1zM259,26h1v1h-1zM262,26h2v1h-2zM272,26h1v1h-1zM276,26h1v1h-1zM279,26h1v1h-1zM284,26h1v1h-1zM287,26h1v1h-1zM289,26h1v1h-1zM292,26h1v1h-1zM297,26h1v1h-1zM251,27h2v1h-2zM259,27h1v1h-1zM262,27h1v1h-1zM264,27h1v1h-1zM276,27h1v1h-1zM279,27h1v1h-1zM284,27h1v1h-1zM286,27h2v1h-2zM289,27h1v1h-1zM291,27h1v1h-1zM297,27h1v1h-1zM247,28h1v1h-1zM250,28h1v1h-1zM252,28h1v1h-1zM258,28h1v1h-1zM262,28h1v1h-1zM275,28h1v1h-1zM279,28h1v1h-1zM284,28h1v1h-1zM286,28h1v1h-1zM289,28h1v1h-1zM291,28h1v1h-1zM297,28h1v1h-1zM247,29h1v1h-1zM252,29h1v1h-1zM258,29h1v1h-1zM262,29h1v1h-1zM275,29h1v1h-1zM279,29h1v1h-1zM284,29h3v1h-3zM290,29h2v1h-2zM296,29h1v1h-1zM246,30h2v1h-2zM252,30h1v1h-1zM257,30h1v1h-1zM262,30h1v1h-1zM274,30h2v1h-2zM280,30h1v1h-1zM285,30h2v1h-2zM290,30h2v1h-2zM296,30h1v1h-1zM245,31h2v1h-2zM252,31h1v1h-1zM256,31h1v1h-1zM262,31h1v1h-1zM274,31h1v1h-1zM280,31h1v1h-1zM285,31h1v1h-1zM290,31h2v1h-2zM295,31h2v1h-2zM281,32h1v1h-1zM295,32h1v1h-1z" fill="#000"/><rect x="287" y="33" width="7" height="1" fill="#000"/><path d="M329,21h1v1h-1zM337,21h1v1h-1zM349,21h1v1h-1zM320,22h1v1h-1zM328,22h1v1h-1zM330,22h1v1h-1zM336,22h1v1h-1zM340,22h1v1h-1zM346,22h1v1h-1zM350,22h1v1h-1zM313,23h2v1h-2zM318,23h1v1h-1zM320,23h1v1h-1zM323,23h5v1h-5zM329,23h1v1h-1zM336,23h1v1h-1zM340,23h1v1h-1zM346,23h1v1h-1zM350,23h1v1h-1zM313,24h2v1h-2zM318,24h1v1h-1zM320,24h1v1h-1zM327,24h1v1h-1zM335,24h1v1h-1zM340,24h1v1h-1zM346,24h1v1h-1zM313,25h2v1h-2zM318,25h1v1h-1zM320,25h1v1h-1zM335,25h1v1h-1zM340,25h1v1h-1zM346,25h1v1h-1zM351,25h1v1h-1zM313,26h2v1h-2zM318,26h1v1h-1zM320,26h1v1h-1zM335,26h1v1h-1zM340,26h1v1h-1zM345,26h2v1h-2zM351,26h1v1h-1zM315,27h1v1h-1zM318,27h1v1h-1zM320,27h1v1h-1zM326,27h1v1h-1zM335,27h1v1h-1zM340,27h7v1h-7zM351,27h1v1h-1zM312,28h1v1h-1zM315,28h1v1h-1zM318,28h1v1h-1zM320,28h2v1h-2zM326,28h1v1h-1zM335,28h1v1h-1zM340,28h1v1h-1zM346,28h1v1h-1zM351,28h1v1h-1zM312,29h1v1h-1zM315,29h1v1h-1zM318,29h1v1h-1zM320,29h2v1h-2zM326,29h1v1h-1zM335,29h1v1h-1zM340,29h1v1h-1zM346,29h1v1h-1zM351,29h1v1h-1zM316,30h1v1h-1zM318,30h1v1h-1zM320,30h2v1h-2zM325,30h1v1h-1zM336,30h1v1h-1zM340,30h1v1h-1zM346,30h1v1h-1zM350,30h1v1h-1zM320,31h1v1h-1zM324,31h1v1h-1zM336,31h1v1h-1zM340,31h1v1h-1zM346,31h1v1h-1zM350,31h1v1h-1zM337,32h1v1h-1zM349,32h1v1h-1z" fill="#000"/><rect x="341" y="33" width="7" height="1" fill="#000"/><path d="M70,678h1v1h-1zM86,678h1v1h-1zM24,679h8v1h-8zM34,679h6v1h-6zM54,679h1v1h-1zM61,679h1v1h-1zM70,679h1v1h-1zM86,679h1v1h-1zM31,680h1v1h-1zM54,680h1v1h-1zM61,680h1v1h-1zM70,680h1v1h-1zM86,680h1v1h-1zM31,681h1v1h-1zM54,681h1v1h-1zM61,681h1v1h-1zM70,681h1v1h-1zM72,681h4v1h-4zM80,681h1v1h-1zM83,681h1v1h-1zM86,681h1v1h-1zM27,682h1v1h-1zM30,682h1v1h-1zM33,682h7v1h-7zM61,682h1v1h-1zM68,682h5v1h-5zM75,682h1v1h-1zM78,682h1v1h-1zM80,682h1v1h-1zM83,682h1v1h-1zM86,682h2v1h-2zM27,683h1v1h-1zM29,683h2v1h-2zM33,683h8v1h-8zM53,683h1v1h-1zM61,683h1v1h-1zM70,683h1v1h-1zM75,683h1v1h-1zM78,683h1v1h-1zM80,683h1v1h-1zM83,683h1v1h-1zM86,683h3v1h-3zM27,684h1v1h-1zM29,684h1v1h-1zM42,684h8v1h-8zM53,684h1v1h-1zM56,684h1v1h-1zM61,684h1v1h-1zM70,684h1v1h-1zM74,684h1v1h-1zM78,684h1v1h-1zM80,684h1v1h-1zM83,684h1v1h-1zM86,684h1v1h-1zM88,684h3v1h-3zM27,685h1v1h-1zM39,685h1v1h-1zM42,685h8v1h-8zM53,685h1v1h-1zM56,685h1v1h-1zM61,685h1v1h-1zM65,685h1v1h-1zM70,685h1v1h-1zM74,685h1v1h-1zM78,685h1v1h-1zM83,685h1v1h-1zM86,685h1v1h-1zM90,685h2v1h-2zM27,686h1v1h-1zM39,686h1v1h-1zM53,686h1v1h-1zM57,686h1v1h-1zM65,686h1v1h-1zM70,686h1v1h-1zM73,686h1v1h-1zM82,686h1v1h-1zM86,686h1v1h-1zM91,686h1v1h-1zM27,687h1v1h-1zM39,687h1v1h-1zM52,687h1v1h-1zM57,687h1v1h-1zM65,687h1v1h-1zM70,687h1v1h-1zM82,687h1v1h-1zM86,687h1v1h-1zM27,688h1v1h-1zM38,688h2v1h-2zM52,688h1v1h-1zM57,688h1v1h-1zM65,688h1v1h-1zM70,688h1v1h-1zM82,688h1v1h-1zM86,688h1v1h-1zM26,689h1v1h-1zM38,689h1v1h-1zM52,689h7v1h-7zM64,689h2v1h-2zM70,689h1v1h-1zM81,689h1v1h-1zM86,689h1v1h-1zM25,690h2v1h-2zM36,690h2v1h-2zM51,690h4v1h-4zM58,690h1v1h-1zM63,690h2v1h-2zM70,690h6v1h-6zM80,690h1v1h-1zM86,690h1v1h-1zM35,691h2v1h-2zM63,691h1v1h-1zM72,691h2v1h-2zM86,691h1v1h-1z" fill="#000"/><path d="M5,722h1v1h-1zM7,722h5v1h-5zM29,722h1v1h-1zM66,722h1v1h-1zM77,722h1v1h-1zM5,723h1v1h-1zM7,723h1v1h-1zM11,723h1v1h-1zM15,723h9v1h-9zM29,723h1v1h-1zM50,723h2v1h-2zM54,723h1v1h-1zM66,723h1v1h-1zM77,723h1v1h-1zM4,724h1v1h-1zM7,724h1v1h-1zM16,724h2v1h-2zM26,724h8v1h-8zM49,724h2v1h-2zM54,724h1v1h-1zM66,724h1v1h-1zM77,724h1v1h-1zM4,725h1v1h-1zM7,725h5v1h-5zM16,725h1v1h-1zM26,725h1v1h-1zM33,725h1v1h-1zM36,725h7v1h-7zM48,725h2v1h-2zM54,725h1v1h-1zM66,725h1v1h-1zM77,725h1v1h-1zM4,726h1v1h-1zM9,726h1v1h-1zM16,726h1v1h-1zM19,726h4v1h-4zM26,726h1v1h-1zM33,726h1v1h-1zM39,726h1v1h-1zM47,726h3v1h-3zM54,726h4v1h-4zM66,726h1v1h-1zM77,726h1v1h-1zM3,727h2v1h-2zM9,727h1v1h-1zM15,727h2v1h-2zM21,727h1v1h-1zM26,727h1v1h-1zM32,727h2v1h-2zM39,727h1v1h-1zM45,727h2v1h-2zM49,727h1v1h-1zM54,727h1v1h-1zM57,727h3v1h-3zM66,727h1v1h-1zM77,727h1v1h-1zM4,728h1v1h-1zM6,728h7v1h-7zM14,728h3v1h-3zM20,728h2v1h-2zM32,728h1v1h-1zM39,728h1v1h-1zM49,728h1v1h-1zM54,728h1v1h-1zM59,728h1v1h-1zM66,728h1v1h-1zM77,728h1v1h-1zM4,729h1v1h-1zM8,729h3v1h-3zM16,729h1v1h-1zM20,729h2v1h-2zM32,729h1v1h-1zM39,729h1v1h-1zM49,729h1v1h-1zM54,729h1v1h-1zM66,729h1v1h-1zM77,729h1v1h-1zM4,730h1v1h-1zM7,730h1v1h-1zM9,730h1v1h-1zM11,730h1v1h-1zM16,730h1v1h-1zM21,730h1v1h-1zM31,730h1v1h-1zM39,730h1v1h-1zM49,730h1v1h-1zM54,730h1v1h-1zM4,731h1v1h-1zM6,731h1v1h-1zM9,731h1v1h-1zM12,731h1v1h-1zM16,731h1v1h-1zM21,731h1v1h-1zM29,731h2v1h-2zM36,731h7v1h-7zM49,731h1v1h-1zM54,731h1v1h-1zM66,731h1v1h-1zM77,731h1v1h-1zM4,732h1v1h-1zM9,732h1v1h-1zM16,732h1v1h-1zM19,732h2v1h-2zM66,732h1v1h-1zM77,732h1v1h-1z" fill="#000"/><path d="M35,746h2v1h-2zM53,746h2v1h-2zM23,747h7v1h-7zM35,747h6v1h-6zM53,747h2v1h-2zM28,748h2v1h-2zM34,748h7v1h-7zM53,748h2v1h-2zM28,749h1v1h-1zM34,749h2v1h-2zM39,749h2v1h-2zM53,749h2v1h-2zM27,750h2v1h-2zM33,750h3v1h-3zM39,750h2v1h-2zM53,750h4v1h-4zM27,751h1v1h-1zM32,751h2v1h-2zM35,751h3v1h-3zM39,751h1v1h-1zM42,751h10v1h-10zM53,751h7v1h-7zM26,752h3v1h-3zM37,752h3v1h-3zM53,752h2v1h-2zM58,752h2v1h-2zM25,753h5v1h-5zM37,753h2v1h-2zM53,753h2v1h-2zM24,754h2v1h-2zM28,754h2v1h-2zM36,754h2v1h-2zM53,754h2v1h-2zM22,755h3v1h-3zM29,755h2v1h-2zM34,755h3v1h-3zM53,755h2v1h-2zM34,756h2v1h-2zM53,756h2v1h-2z" fill="#000"/><path d="M192,749h2v1h-2zM206,749h1v1h-1zM215,749h2v1h-2zM220,749h1v1h-1zM235,749h8v1h-8zM185,750h2v1h-2zM192,750h2v1h-2zM195,750h9v1h-9zM206,750h1v1h-1zM215,750h2v1h-2zM220,750h1v1h-1zM235,750h8v1h-8zM185,751h2v1h-2zM192,751h2v1h-2zM202,751h2v1h-2zM206,751h1v1h-1zM213,751h10v1h-10zM237,751h2v1h-2zM186,752h2v1h-2zM192,752h1v1h-1zM202,752h1v1h-1zM206,752h3v1h-3zM214,752h9v1h-9zM237,752h2v1h-2zM186,753h2v1h-2zM191,753h2v1h-2zM202,753h1v1h-1zM206,753h6v1h-6zM215,753h2v1h-2zM220,753h1v1h-1zM224,753h20v1h-20zM191,754h2v1h-2zM201,754h2v1h-2zM206,754h1v1h-1zM210,754h3v1h-3zM215,754h2v1h-2zM220,754h1v1h-1zM224,754h9v1h-9zM237,754h2v1h-2zM190,755h2v1h-2zM201,755h2v1h-2zM206,755h1v1h-1zM219,755h2v1h-2zM237,755h2v1h-2zM189,756h2v1h-2zM199,756h3v1h-3zM206,756h1v1h-1zM219,756h2v1h-2zM237,756h2v1h-2zM187,757h3v1h-3zM197,757h4v1h-4zM206,757h1v1h-1zM218,757h2v1h-2zM237,757h6v1h-6zM187,758h2v1h-2zM197,758h2v1h-2zM206,758h1v1h-1zM217,758h2v1h-2zM238,758h5v1h-5z" fill="#000"/><path d="M255,749h5v1h-5zM263,749h3v1h-3zM269,749h4v1h-4zM277,749h3v1h-3zM255,750h5v1h-5zM262,750h2v1h-2zM265,750h2v1h-2zM269,750h2v1h-2zM272,750h2v1h-2zM277,750h4v1h-4zM255,751h2v1h-2zM262,751h1v1h-1zM266,751h1v1h-1zM273,751h1v1h-1zM276,751h2v1h-2zM280,751h2v1h-2zM255,752h2v1h-2zM262,752h1v1h-1zM266,752h1v1h-1zM272,752h2v1h-2zM276,752h2v1h-2zM280,752h2v1h-2zM255,753h5v1h-5zM262,753h4v1h-4zM270,753h3v1h-3zM276,753h2v1h-2zM280,753h2v1h-2zM255,754h5v1h-5zM262,754h5v1h-5zM271,754h3v1h-3zM276,754h2v1h-2zM280,754h2v1h-2zM255,755h2v1h-2zM262,755h1v1h-1zM266,755h1v1h-1zM273,755h1v1h-1zM276,755h2v1h-2zM280,755h2v1h-2zM255,756h2v1h-2zM261,756h2v1h-2zM266,756h2v1h-2zM273,756h2v1h-2zM276,756h2v1h-2zM280,756h2v1h-2zM255,757h5v1h-5zM262,757h2v1h-2zM265,757h2v1h-2zM268,757h6v1h-6zM277,757h4v1h-4zM255,758h6v1h-6zM262,758h5v1h-5zM269,758h4v1h-4zM277,758h4v1h-4z" fill="#000"/></svg>
<script>document.querySelectorAll(".fit").forEach(function(d){var s=d.firstChild;var w=s.getBoundingClientRect().width;if(w>0)s.style.transform="scaleX("+(d.clientWidth/w)+") translateZ(0)";});</script>
</body></html>
